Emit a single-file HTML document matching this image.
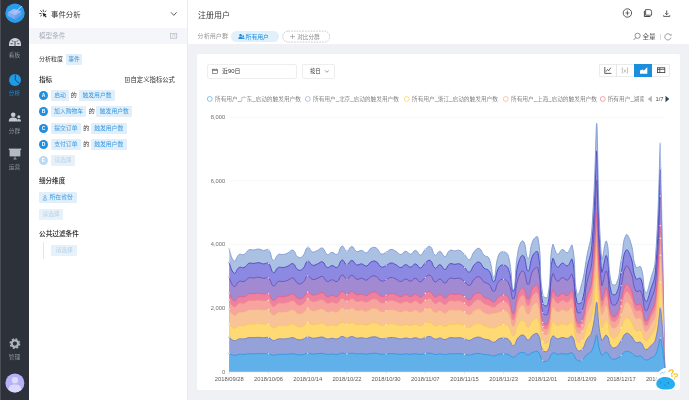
<!DOCTYPE html>
<html lang="zh-CN">
<head>
<meta charset="utf-8">
<title>事件分析</title>
<style>
*{box-sizing:border-box;margin:0;padding:0}
html,body{width:689px;height:400px;overflow:hidden;background:#eff1f5;font-family:"Liberation Sans","Noto Sans CJK SC",sans-serif;color:#444;font-size:6.5px;line-height:1}
.abs{position:absolute;left:0;top:0;width:689px;height:400px;overflow:hidden;will-change:transform}
.abs>*{position:absolute}
.t{white-space:nowrap;line-height:10px;height:10px}
.tag{background:#e1effa;color:#3a9ae0;border-radius:1px;height:11px;line-height:11px;font-size:5.8px;text-align:center;white-space:nowrap}
.tag.dim{background:#e6f1fa;color:#b9d3ea}
.b{font-weight:500;color:#222}
.circ{width:9px;height:9px;border-radius:50%;background:#1e90dd;color:#fff;font-size:5px;line-height:9px;text-align:center;font-weight:bold}
.nav{color:#8d939f;font-size:5.7px;width:29px;text-align:center;line-height:8px;height:8px;left:0}
.lg{font-size:5.7px;color:#4a4a4a;font-weight:300;white-space:nowrap;line-height:8px;height:8px}
.ring{width:5.5px;height:5.5px;border-radius:50%;border:0.55px solid #1e90dd;background:#fff}
.de{color:#333;font-size:6px}
svg{position:absolute;left:0;top:0;overflow:visible}
</style>
</head>
<body>
<div class="abs">
  <!-- sidebar -->
  <div style="left:0;top:0;width:29px;height:400px;background:#2c313a"></div>
  <div style="left:0;top:0;width:1px;height:400px;background:#4a4d54"></div>
  <div class="nav" style="top:51px">看板</div>
  <div class="nav" style="top:89px;color:#1f8fdc">分析</div>
  <div class="nav" style="top:126.5px">分群</div>
  <div class="nav" style="top:162.5px">运营</div>
  <div class="nav" style="top:352.5px">管理</div>

  <!-- left panel -->
  <div style="left:29px;top:0;width:158px;height:400px;background:#fff"></div>
  <div style="left:187px;top:0;width:1px;height:400px;background:#e8ebef"></div>
  <div style="left:29px;top:28px;width:158px;height:16px;background:#f4f6f9"></div>
  <div class="t" style="left:51px;top:9.6px;font-size:7.4px;color:#333">事件分析</div>
  <div class="t" style="left:39px;top:31px;font-size:6.6px;color:#a9aeb8">模型条件</div>
  <div class="t" style="left:39px;top:54px;font-size:6px;color:#333">分析粒度</div>
  <div class="tag" style="left:66px;top:54px;width:16px">事件</div>
  <div class="t b" style="left:39px;top:75px;font-size:6.6px">指标</div>
  <div class="t" style="left:130.5px;top:75px;font-size:6.35px;color:#333">自定义指标公式</div>

  <div class="circ" style="left:39px;top:91px">A</div>
  <div class="tag" style="left:51px;top:90px;width:18px">启动</div>
  <div class="t de" style="left:70.8px;top:89.9px">的</div>
  <div class="tag" style="left:79px;top:90px;width:36px">触发用户数</div>

  <div class="circ" style="left:39px;top:107px">B</div>
  <div class="tag" style="left:51px;top:106px;width:35.2px">加入购物车</div>
  <div class="t de" style="left:88.8px;top:105.9px">的</div>
  <div class="tag" style="left:96.3px;top:106px;width:36px">触发用户数</div>

  <div class="circ" style="left:39px;top:124px">C</div>
  <div class="tag" style="left:51px;top:123px;width:29.7px">提交订单</div>
  <div class="t de" style="left:83.2px;top:122.9px">的</div>
  <div class="tag" style="left:90.7px;top:123px;width:36px">触发用户数</div>

  <div class="circ" style="left:39px;top:140px">D</div>
  <div class="tag" style="left:51px;top:139px;width:29.7px">支付订单</div>
  <div class="t de" style="left:83.2px;top:138.9px">的</div>
  <div class="tag" style="left:90.7px;top:139px;width:36px">触发用户数</div>

  <div class="circ" style="left:39px;top:156px;background:#b9daf5">E</div>
  <div class="tag dim" style="left:51px;top:155px;width:23.7px">请选择</div>

  <div class="t b" style="left:39px;top:176.3px;font-size:6.55px">细分维度</div>
  <div class="tag" style="left:39px;top:192.4px;width:37.5px;text-align:left;padding-left:10.4px;font-size:5.9px">所在省份</div>
  <div class="tag dim" style="left:39px;top:208.6px;width:23.7px">请选择</div>
  <div class="t b" style="left:39px;top:228.6px;font-size:6.67px">公共过滤条件</div>
  <div style="left:43px;top:242px;width:0.8px;height:16.6px;background:#e3e6ea"></div>
  <div class="tag dim" style="left:51px;top:244.6px;width:26.4px">请选择</div>

  <!-- main header -->
  <div style="left:188px;top:0;width:501px;height:44px;background:#fff"></div>
  <div class="t" style="left:198px;top:10.6px;font-size:8px;color:#3a3a3a">注册用户</div>
  <div class="t" style="left:197.6px;top:31.3px;font-size:6.1px;color:#999">分析用户群</div>
  <div style="left:231.3px;top:30.8px;width:48px;height:11.6px;border-radius:6px;background:#e1f0fb"></div>
  <div class="t" style="left:245.6px;top:31.5px;font-size:5.85px;color:#1e8ee0">所有用户</div>
  
  <div class="t" style="left:297.2px;top:31.5px;font-size:5.65px;color:#8a8a8a">对比分群</div>
  <div class="t" style="left:642.5px;top:32px;font-size:6.5px;color:#555">全量</div>
  <div style="left:660px;top:34px;width:0.7px;height:6px;background:#ddd"></div>

  <!-- card -->
  <div style="left:196.5px;top:54px;width:483px;height:335.5px;background:#fff;border-radius:2px"></div>
  <div style="left:206.5px;top:63.5px;width:90.7px;height:15.2px;border:0.7px solid #eee;border-radius:2px;background:#fff"></div>
  <div class="t" style="left:222px;top:66.3px;font-size:5.9px;color:#333">近90日</div>
  <div style="left:301.6px;top:63.5px;width:33.1px;height:15.2px;border:0.7px solid #eee;border-radius:2px;background:#fff"></div>
  <div class="t" style="left:309.9px;top:66.3px;font-size:5.4px;color:#333">按日</div>

  <!-- toggle -->
  <div style="left:598.6px;top:63.6px;width:71.4px;height:13.2px;border:0.7px solid #ebebeb;border-radius:1px;background:#fff"></div>
  <div style="left:616.4px;top:63.6px;width:0.7px;height:13.2px;background:#e6e6e6"></div>
  <div style="left:634px;top:63.6px;width:17.7px;height:13.2px;background:#1b8fdd"></div>

  <!-- legend -->
  <div class="lg" style="left:215px;top:95px">所有用户_广东_启动的触发用户数</div>
  <div class="lg" style="left:313px;top:95px">所有用户_北京_启动的触发用户数</div>
  <div class="lg" style="left:412px;top:95px">所有用户_浙江_启动的触发用户数</div>
  <div class="lg" style="left:511px;top:95px">所有用户_上海_启动的触发用户数</div>
  <div class="lg" style="left:607.7px;top:95px;width:36.3px;overflow:hidden">所有用户_湖南</div>
  <div class="lg" style="left:655.5px;top:95px;font-size:5.8px;font-weight:400">1/7</div>

  <svg width="689" height="400" viewBox="0 0 689 400">
    <!-- gridlines -->
    <g stroke="#f1f1f1" stroke-width="0.6">
      <line x1="229" x2="665" y1="117.2" y2="117.2"/>
      <line x1="229" x2="665" y1="180.8" y2="180.8"/>
      <line x1="229" x2="665" y1="244.4" y2="244.4"/>
      <line x1="229" x2="665" y1="308.1" y2="308.1"/>
    </g>
    <g font-family="Liberation Sans, sans-serif" font-size="5.75" fill="#6e6e6e" text-anchor="end">
      <text x="225.2" y="119.2">8,000</text>
      <text x="225.2" y="182.8">6,000</text>
      <text x="225.2" y="246.4">4,000</text>
      <text x="225.2" y="310.1">2,000</text>
      <text x="225.2" y="373.7">0</text>
    </g>
    <path d="M229.3 249.0C229.3 249.0 231.2 259.3 234.2 261.0C236.1 262.1 236.1 256.5 239.1 254.5C241.0 253.3 242.0 255.5 244.0 254.5C246.9 253.2 246.1 251.2 248.9 249.9C251.0 248.9 251.4 250.1 253.8 249.9C256.3 249.7 256.3 249.0 258.7 249.1C261.2 249.2 261.2 250.2 263.6 250.4C266.0 250.6 267.1 248.4 268.5 249.9C272.0 253.4 270.5 258.9 273.4 260.3C275.4 261.2 275.4 256.3 278.3 254.5C280.3 253.4 280.8 254.9 283.2 254.5C285.7 254.1 285.8 253.8 288.1 252.8C290.7 251.7 291.1 249.3 293.0 250.2C296.0 251.5 294.8 255.3 297.9 257.1C299.7 258.2 301.2 257.6 302.8 256.0C306.1 252.7 304.8 248.5 307.7 247.3C309.7 246.5 309.8 251.0 312.6 251.9C314.7 252.6 315.1 251.3 317.5 250.4C320.0 249.4 320.4 247.3 322.4 248.1C325.3 249.3 324.4 253.2 327.3 254.5C329.3 255.3 329.8 252.3 332.2 252.3C334.7 252.3 335.4 255.6 337.1 254.5C340.3 252.5 339.2 247.0 342.0 246.1C344.1 245.4 344.4 251.2 346.9 251.3C349.3 251.4 349.4 246.4 351.8 246.5C354.3 246.6 353.8 250.5 356.7 251.6C358.7 252.4 359.2 250.1 361.6 250.4C364.1 250.7 364.3 253.3 366.5 252.8C369.2 252.1 368.5 249.4 371.4 248.0C373.4 247.0 374.4 246.9 376.3 248.0C379.3 249.8 378.3 252.5 381.2 253.8C383.2 254.7 383.8 253.3 386.1 252.3C388.7 251.1 388.4 249.7 391.0 249.4C393.3 249.2 393.6 250.1 395.9 251.3C398.5 252.6 398.3 254.5 400.8 254.5C403.2 254.5 403.2 251.4 405.7 251.3C408.1 251.2 408.2 254.4 410.6 254.2C413.1 254.0 413.1 250.2 415.5 250.4C418.0 250.6 418.0 255.3 420.4 255.1C422.9 254.8 422.5 251.8 425.3 249.4C427.4 247.5 428.4 245.4 430.2 246.5C433.3 248.3 432.1 253.7 435.1 255.2C437.0 256.1 437.7 251.0 440.0 251.3C442.6 251.7 442.5 256.9 444.9 256.7C447.4 256.5 446.7 252.2 449.8 250.4C451.6 249.3 452.2 250.9 454.7 250.9C457.1 250.9 457.4 249.6 459.6 250.4C462.3 251.4 462.1 252.3 464.5 254.5C467.0 256.9 467.2 260.2 469.4 259.6C472.1 258.8 471.2 255.0 474.2 251.6C476.1 249.4 477.1 247.7 479.1 248.4C482.0 249.5 481.1 252.3 484.0 255.2C486.0 257.2 487.8 255.6 488.9 258.1C492.7 266.5 491.6 277.8 493.8 277.0C496.5 276.1 494.8 264.8 498.7 254.7C499.7 252.2 501.4 251.4 503.6 251.8C506.3 252.3 507.7 253.3 508.5 256.5C512.6 272.3 511.2 291.3 513.4 289.8C516.1 288.0 514.4 269.3 518.3 249.8C519.3 245.0 521.5 239.6 523.2 241.1C526.4 243.9 525.7 258.7 528.1 258.5C530.6 258.3 529.3 248.5 533.0 240.4C534.2 238.0 537.5 235.0 537.9 237.5C542.4 262.3 538.3 267.9 542.8 295.0C543.2 297.4 547.3 298.8 547.7 296.5C552.2 273.7 548.6 262.4 552.6 244.8C553.4 241.2 554.5 252.8 557.5 254.2C559.4 255.1 559.8 249.9 562.4 249.5C564.7 249.2 565.3 253.5 567.3 252.7C570.2 251.5 571.5 242.4 572.2 245.5C576.4 263.0 573.2 279.0 577.1 294.0C578.1 297.7 580.5 288.8 582.0 283.0C585.4 269.8 584.4 269.5 586.9 256.0C589.3 243.0 590.8 243.2 591.8 230.0C595.7 176.8 595.8 123.3 596.7 123.3C597.9 126.9 597.3 207.1 601.6 259.0C602.2 266.1 605.0 237.5 606.5 241.2C609.9 249.5 607.0 263.9 611.4 283.0C611.9 285.2 615.5 285.8 616.3 283.8C620.4 274.3 618.8 271.9 621.2 260.0C623.7 247.5 622.5 241.0 626.1 235.0C627.4 232.7 629.6 238.8 631.0 243.4C634.5 254.8 631.8 257.2 635.9 267.0C636.7 269.0 640.0 265.0 640.8 267.0C644.9 277.7 642.5 288.5 645.7 292.5C647.4 294.7 648.7 286.1 650.6 279.4C653.6 268.8 654.7 268.9 655.5 257.9C659.6 201.0 659.6 135.4 660.4 143.6C661.8 159.6 665.3 368.0 665.3 368.0L665.3 371.7 L229.3 371.7 Z" fill="#abc1e3"/>
<path d="M229.3 262.6C229.3 262.6 231.3 271.8 234.2 273.3C236.2 274.2 236.2 269.3 239.1 267.5C241.1 266.4 241.9 268.4 244.0 267.5C246.8 266.4 246.2 264.6 248.9 263.4C251.1 262.5 251.4 263.6 253.8 263.4C256.3 263.2 256.3 262.6 258.7 262.7C261.2 262.8 261.2 263.7 263.6 263.9C266.1 264.0 267.0 262.0 268.5 263.4C271.9 266.4 270.5 271.4 273.4 272.7C275.4 273.5 275.4 269.0 278.3 267.5C280.3 266.5 280.8 267.9 283.2 267.5C285.7 267.1 285.7 266.9 288.1 266.0C290.6 265.0 291.0 262.9 293.0 263.7C295.9 264.8 294.9 268.2 297.9 269.8C299.8 270.8 301.1 270.4 302.8 268.8C306.0 266.0 304.8 262.2 307.7 261.1C309.7 260.4 309.9 264.4 312.6 265.2C314.8 265.8 315.1 264.7 317.5 263.9C320.0 263.0 320.4 261.1 322.4 261.8C325.3 262.9 324.4 266.4 327.3 267.5C329.3 268.3 329.8 265.6 332.2 265.6C334.7 265.6 335.3 268.5 337.1 267.5C340.2 265.8 339.2 260.9 342.0 260.0C344.1 259.4 344.4 264.6 346.9 264.7C349.3 264.8 349.4 260.3 351.8 260.4C354.3 260.5 353.9 263.9 356.7 264.9C358.8 265.7 359.2 263.6 361.6 263.9C364.1 264.1 364.3 266.5 366.5 266.0C369.2 265.4 368.6 262.9 371.4 261.7C373.5 260.8 374.3 260.7 376.3 261.7C379.2 263.3 378.3 265.8 381.2 266.9C383.2 267.7 383.7 266.5 386.1 265.6C388.6 264.5 388.5 263.2 391.0 263.0C393.4 262.8 393.5 263.6 395.9 264.7C398.4 265.8 398.3 267.5 400.8 267.5C403.2 267.5 403.2 264.7 405.7 264.7C408.1 264.6 408.2 267.4 410.6 267.2C413.1 267.0 413.1 263.7 415.5 263.9C418.0 264.1 418.0 268.3 420.4 268.0C422.9 267.8 422.5 265.1 425.3 263.0C427.4 261.3 428.3 259.4 430.2 260.4C433.2 262.0 432.1 266.8 435.1 268.1C437.0 269.0 437.7 264.4 440.0 264.7C442.6 265.0 442.5 269.7 444.9 269.5C447.4 269.3 446.8 265.4 449.8 263.9C451.7 262.8 452.2 264.3 454.7 264.3C457.1 264.3 457.4 263.2 459.6 263.9C462.3 264.8 462.1 265.6 464.5 267.5C467.0 269.6 467.2 272.6 469.4 272.0C472.1 271.3 471.3 267.9 474.2 264.9C476.2 263.0 477.1 261.4 479.1 262.1C482.0 263.0 481.2 265.6 484.0 268.1C486.1 269.9 487.4 268.6 488.9 270.7C492.3 275.3 491.7 282.3 493.8 281.6C496.5 280.8 495.2 273.7 498.7 267.7C500.1 265.4 501.4 264.7 503.6 265.1C506.3 265.5 507.5 266.4 508.5 269.3C512.4 279.6 511.3 292.8 513.4 291.5C516.2 289.8 514.6 276.9 518.3 263.3C519.5 259.0 521.5 254.2 523.2 255.6C526.4 258.1 525.7 271.2 528.1 271.1C530.6 270.9 529.3 262.0 533.0 255.0C534.2 252.7 537.4 250.0 537.9 252.4C542.3 274.3 538.4 279.6 542.8 303.5C543.3 305.9 547.2 307.1 547.7 304.8C552.1 284.7 548.6 274.4 552.6 258.9C553.5 255.6 554.6 266.0 557.5 267.2C559.5 268.1 559.8 263.4 562.4 263.1C564.7 262.8 565.3 266.6 567.3 265.9C570.2 264.9 571.4 256.6 572.2 259.5C576.3 275.0 572.7 283.9 577.1 302.6C577.6 304.8 581.3 303.6 582.0 301.3C586.2 286.7 584.1 285.0 586.9 268.8C589.0 257.2 590.8 257.5 591.8 245.7C595.7 198.5 595.8 150.9 596.7 150.9C597.9 154.0 597.3 225.4 601.6 271.5C602.2 277.8 605.0 252.4 606.5 255.7C609.9 263.1 607.1 276.1 611.4 292.8C612.0 295.1 615.4 295.5 616.3 293.6C620.3 285.2 618.8 283.0 621.2 272.4C623.7 261.3 622.6 255.5 626.1 250.2C627.5 248.1 629.6 253.5 631.0 257.6C634.4 267.7 631.9 270.1 635.9 278.6C636.8 280.6 639.9 276.6 640.8 278.6C644.8 288.0 642.5 297.7 645.7 301.3C647.4 303.2 648.7 295.6 650.6 289.6C653.6 280.3 654.7 280.3 655.5 270.5C659.6 220.0 659.6 161.6 660.4 168.9C661.8 183.2 665.3 368.4 665.3 368.4L665.3 371.7 L229.3 371.7 Z" fill="#8b89e2"/>
<path d="M229.3 277.2C229.3 277.2 231.3 285.2 234.2 286.5C236.2 287.3 236.3 282.9 239.1 281.5C241.2 280.4 241.9 282.2 244.0 281.5C246.7 280.5 246.2 278.9 248.9 277.9C251.1 277.1 251.4 278.1 253.8 277.9C256.3 277.8 256.3 277.2 258.7 277.3C261.2 277.4 261.2 278.1 263.6 278.3C266.1 278.5 266.9 276.6 268.5 277.9C271.7 280.4 270.6 284.9 273.4 285.9C275.5 286.7 275.5 282.7 278.3 281.5C280.4 280.5 280.8 281.8 283.2 281.5C285.7 281.1 285.7 281.0 288.1 280.1C290.6 279.3 291.0 277.4 293.0 278.1C295.9 279.1 295.0 282.1 297.9 283.5C299.9 284.4 301.0 284.0 302.8 282.6C305.9 280.3 304.9 276.8 307.7 275.9C309.8 275.2 309.9 278.8 312.6 279.5C314.8 280.0 315.1 279.0 317.5 278.3C320.0 277.6 320.3 275.9 322.4 276.5C325.2 277.4 324.5 280.5 327.3 281.5C329.4 282.1 329.8 279.8 332.2 279.8C334.7 279.8 335.2 282.4 337.1 281.5C340.1 280.0 339.3 275.7 342.0 275.0C344.1 274.4 344.4 278.9 346.9 279.0C349.3 279.1 349.4 275.2 351.8 275.3C354.3 275.4 354.0 278.4 356.7 279.2C358.9 279.9 359.2 278.1 361.6 278.3C364.1 278.5 364.2 280.6 366.5 280.1C369.1 279.6 368.7 277.5 371.4 276.5C373.6 275.6 374.2 275.5 376.3 276.5C379.1 277.7 378.4 280.0 381.2 280.9C383.3 281.6 383.7 280.6 386.1 279.8C388.6 278.9 388.5 277.7 391.0 277.5C393.4 277.3 393.5 278.0 395.9 279.0C398.4 280.0 398.3 281.5 400.8 281.5C403.2 281.5 403.2 279.1 405.7 279.0C408.1 278.9 408.2 281.4 410.6 281.2C413.1 281.0 413.1 278.1 415.5 278.3C418.0 278.5 418.0 282.1 420.4 281.9C422.9 281.7 422.6 279.3 425.3 277.5C427.5 276.0 428.2 274.4 430.2 275.3C433.1 276.7 432.2 280.9 435.1 282.0C437.1 282.8 437.7 278.7 440.0 279.0C442.5 279.3 442.5 283.3 444.9 283.1C447.4 283.0 446.9 279.6 449.8 278.3C451.8 277.4 452.2 278.7 454.7 278.7C457.1 278.7 457.3 277.7 459.6 278.3C462.2 279.1 462.1 279.8 464.5 281.5C467.0 283.3 467.2 285.9 469.4 285.4C472.1 284.8 471.4 281.8 474.2 279.2C476.3 277.5 477.0 276.2 479.1 276.8C481.9 277.5 481.2 279.9 484.0 282.0C486.1 283.6 487.1 282.4 488.9 284.2C492.0 287.2 491.7 292.1 493.8 291.5C496.6 290.8 495.4 285.7 498.7 281.6C500.3 279.6 501.3 279.1 503.6 279.4C506.2 279.7 507.2 280.4 508.5 283.0C512.1 290.2 511.3 300.1 513.4 299.0C516.2 297.5 514.8 287.9 518.3 277.8C519.7 274.0 521.4 269.9 523.2 271.1C526.3 273.3 525.7 284.7 528.1 284.5C530.6 284.4 529.4 276.5 533.0 270.6C534.3 268.4 537.4 266.1 537.9 268.4C542.3 287.1 538.4 292.2 542.8 312.6C543.3 314.9 547.2 316.0 547.7 313.8C552.1 296.6 548.6 287.4 552.6 274.0C553.5 271.1 554.6 280.2 557.5 281.2C559.5 282.0 559.8 277.9 562.4 277.6C564.7 277.3 565.2 280.7 567.3 280.1C570.1 279.2 571.4 271.9 572.2 274.5C576.3 287.8 572.8 295.9 577.1 311.9C577.7 314.0 581.3 312.9 582.0 310.7C586.2 298.3 584.1 296.6 586.9 282.6C589.0 272.5 590.8 272.8 591.8 262.6C595.7 221.7 595.8 180.4 596.7 180.4C597.9 183.2 597.3 245.1 601.6 284.9C602.2 290.5 605.0 268.4 606.5 271.2C609.9 277.6 607.1 289.2 611.4 303.4C612.0 305.6 615.3 305.8 616.3 304.0C620.2 297.0 618.8 294.9 621.2 285.7C623.7 276.1 622.6 271.0 626.1 266.4C627.5 264.6 629.5 269.2 631.0 272.9C634.4 281.5 632.0 283.9 635.9 291.1C636.9 293.0 639.8 289.2 640.8 291.1C644.7 299.0 642.5 307.6 645.7 310.7C647.4 312.4 648.6 305.9 650.6 300.6C653.5 292.6 654.7 292.6 655.5 284.1C659.6 240.4 659.6 189.8 660.4 196.1C661.8 208.4 665.3 368.9 665.3 368.9L665.3 371.7 L229.3 371.7 Z" fill="#a18ad2"/>
<path d="M229.3 293.2C229.3 293.2 231.4 299.8 234.2 300.9C236.3 301.6 236.4 297.9 239.1 296.7C241.3 295.8 241.8 297.4 244.0 296.7C246.7 295.9 246.3 294.5 248.9 293.7C251.2 293.1 251.4 293.9 253.8 293.7C256.3 293.6 256.3 293.2 258.7 293.2C261.2 293.3 261.2 293.9 263.6 294.1C266.1 294.2 266.7 292.6 268.5 293.7C271.6 295.7 270.6 299.6 273.4 300.4C275.5 301.0 275.6 297.7 278.3 296.7C280.5 295.9 280.8 297.0 283.2 296.7C285.7 296.4 285.7 296.3 288.1 295.6C290.6 294.9 290.9 293.3 293.0 293.9C295.8 294.7 295.1 297.3 297.9 298.4C300.0 299.2 300.9 298.9 302.8 297.7C305.8 295.8 305.0 292.8 307.7 292.1C309.8 291.5 310.0 294.5 312.6 295.0C314.9 295.5 315.1 294.7 317.5 294.1C320.0 293.5 320.2 292.0 322.4 292.6C325.1 293.3 324.6 295.9 327.3 296.7C329.5 297.3 329.8 295.3 332.2 295.3C334.7 295.3 335.1 297.5 337.1 296.7C340.0 295.5 339.3 291.9 342.0 291.3C344.2 290.9 344.4 294.6 346.9 294.6C349.3 294.7 349.4 291.5 351.8 291.6C354.3 291.6 354.0 294.2 356.7 294.8C358.9 295.4 359.2 293.9 361.6 294.1C364.1 294.3 364.2 296.0 366.5 295.6C369.1 295.2 368.7 293.4 371.4 292.5C373.6 291.8 374.1 291.7 376.3 292.5C379.0 293.6 378.5 295.5 381.2 296.2C383.4 296.9 383.7 296.0 386.1 295.3C388.6 294.6 388.5 293.6 391.0 293.4C393.4 293.3 393.5 293.8 395.9 294.6C398.4 295.5 398.3 296.7 400.8 296.7C403.2 296.7 403.2 294.7 405.7 294.6C408.1 294.6 408.2 296.6 410.6 296.5C413.1 296.4 413.1 293.9 415.5 294.1C418.0 294.2 418.0 297.2 420.4 297.1C422.9 296.9 422.6 294.9 425.3 293.4C427.5 292.2 428.1 290.8 430.2 291.6C433.0 292.7 432.3 296.3 435.1 297.1C437.2 297.8 437.6 294.4 440.0 294.6C442.5 294.9 442.5 298.2 444.9 298.1C447.4 298.0 447.0 295.1 449.8 294.1C451.9 293.3 452.2 294.4 454.7 294.4C457.1 294.4 457.3 293.5 459.6 294.1C462.2 294.7 462.1 295.3 464.5 296.7C467.0 298.2 467.1 300.4 469.4 300.0C472.0 299.4 471.4 296.9 474.2 294.8C476.3 293.3 477.0 292.3 479.1 292.8C481.9 293.4 481.3 295.4 484.0 297.1C486.2 298.5 486.6 297.8 488.9 299.0C491.5 300.3 491.7 302.5 493.8 302.0C496.6 301.4 495.9 298.8 498.7 296.8C500.8 295.3 501.3 294.7 503.6 295.0C506.2 295.3 507.3 295.5 508.5 298.0C512.2 305.1 511.3 315.0 513.4 314.0C516.2 312.8 514.7 303.2 518.3 293.7C519.6 290.3 521.4 287.1 523.2 288.1C526.3 289.8 525.7 299.4 528.1 299.3C530.6 299.1 529.6 292.4 533.0 287.7C534.5 285.7 537.3 283.7 537.9 285.8C542.2 301.1 538.5 306.0 542.8 322.6C543.4 324.8 547.1 325.7 547.7 323.6C552.0 309.6 548.6 301.5 552.6 290.5C553.5 287.9 554.7 295.6 557.5 296.5C559.6 297.1 559.9 293.7 562.4 293.5C564.8 293.3 565.2 296.1 567.3 295.5C570.0 294.8 571.3 288.6 572.2 290.9C576.2 301.8 572.9 309.0 577.1 322.0C577.8 324.0 581.2 323.1 582.0 321.0C586.1 311.0 584.1 309.2 586.9 297.7C589.0 289.2 590.8 289.6 591.8 281.0C595.7 247.1 595.8 212.7 596.7 212.7C597.9 215.0 597.3 266.6 601.6 299.6C602.2 304.3 605.0 285.8 606.5 288.2C609.9 293.5 607.2 303.4 611.4 314.9C612.1 317.0 615.1 317.2 616.3 315.4C620.0 309.8 618.8 307.8 621.2 300.2C623.7 292.2 622.7 287.9 626.1 284.2C627.6 282.6 629.4 286.4 631.0 289.6C634.3 296.6 632.1 298.9 635.9 304.7C637.0 306.5 639.7 302.9 640.8 304.7C644.6 311.0 642.6 318.5 645.7 321.0C647.5 322.5 648.6 317.0 650.6 312.6C653.5 306.0 654.7 306.1 655.5 298.9C659.6 262.6 659.6 220.5 660.4 225.7C661.8 236.0 665.3 369.3 665.3 369.3L665.3 371.7 L229.3 371.7 Z" fill="#ee819f"/>
<path d="M229.3 299.9C229.3 299.9 231.4 306.0 234.2 306.9C236.3 307.6 236.4 304.2 239.1 303.1C241.3 302.3 241.8 303.8 244.0 303.1C246.7 302.4 246.3 301.2 248.9 300.4C251.2 299.8 251.4 300.6 253.8 300.4C256.3 300.3 256.3 299.9 258.7 300.0C261.2 300.1 261.2 300.6 263.6 300.7C266.1 300.9 266.6 299.3 268.5 300.4C271.5 302.2 270.7 305.8 273.4 306.5C275.6 307.1 275.6 304.1 278.3 303.1C280.5 302.4 280.8 303.4 283.2 303.1C285.7 302.9 285.7 302.8 288.1 302.1C290.6 301.5 290.8 300.1 293.0 300.6C295.7 301.3 295.2 303.7 297.9 304.7C300.1 305.4 300.8 305.2 302.8 304.0C305.7 302.3 305.0 299.6 307.7 298.9C309.9 298.4 310.0 301.1 312.6 301.6C314.9 302.0 315.1 301.3 317.5 300.7C320.0 300.2 320.2 298.9 322.4 299.4C325.1 300.1 324.6 302.5 327.3 303.1C329.5 303.7 329.8 301.9 332.2 301.9C334.7 301.9 335.0 303.9 337.1 303.1C339.9 302.1 339.3 298.7 342.0 298.2C344.2 297.8 344.4 301.2 346.9 301.3C349.3 301.3 349.4 298.4 351.8 298.5C354.3 298.5 354.1 300.8 356.7 301.4C359.0 302.0 359.2 300.6 361.6 300.7C364.1 300.9 364.2 302.5 366.5 302.1C369.1 301.8 368.8 300.1 371.4 299.3C373.7 298.7 374.1 298.6 376.3 299.3C379.0 300.3 378.5 302.0 381.2 302.7C383.4 303.3 383.7 302.5 386.1 301.9C388.6 301.2 388.5 300.3 391.0 300.2C393.4 300.0 393.5 300.5 395.9 301.3C398.4 302.0 398.3 303.1 400.8 303.1C403.2 303.1 403.2 301.3 405.7 301.3C408.1 301.2 408.2 303.1 410.6 303.0C413.1 302.8 413.1 300.6 415.5 300.7C418.0 300.9 418.0 303.6 420.4 303.5C422.9 303.3 422.7 301.5 425.3 300.2C427.6 299.0 428.1 297.7 430.2 298.5C433.0 299.4 432.3 302.8 435.1 303.5C437.2 304.2 437.6 301.1 440.0 301.3C442.5 301.5 442.5 304.6 444.9 304.4C447.4 304.3 447.0 301.7 449.8 300.7C451.9 300.0 452.2 301.0 454.7 301.0C457.1 301.0 457.2 300.2 459.6 300.7C462.1 301.3 462.1 301.8 464.5 303.1C467.0 304.5 467.1 306.5 469.4 306.1C472.0 305.7 471.5 303.3 474.2 301.4C476.4 300.0 476.9 299.1 479.1 299.6C481.8 300.1 481.4 302.0 484.0 303.5C486.3 304.8 486.5 304.4 488.9 305.2C491.4 306.1 491.6 307.5 493.8 307.0C496.5 306.5 496.1 304.7 498.7 303.3C501.0 302.0 501.3 301.3 503.6 301.6C506.2 301.8 507.3 302.0 508.5 304.3C512.2 311.2 511.2 320.9 513.4 320.0C516.1 318.9 514.7 309.5 518.3 300.4C519.6 297.2 521.3 294.3 523.2 295.3C526.2 296.9 525.7 305.6 528.1 305.5C530.6 305.4 529.6 299.1 533.0 294.9C534.5 293.0 537.3 291.1 537.9 293.2C542.2 307.1 538.5 311.8 542.8 326.8C543.4 329.0 547.0 329.8 547.7 327.7C551.9 315.1 548.7 307.4 552.6 297.5C553.6 295.1 554.7 302.2 557.5 303.0C559.6 303.6 559.9 300.4 562.4 300.2C564.8 300.0 565.1 302.6 567.3 302.1C570.0 301.4 571.3 295.7 572.2 297.9C576.2 307.7 572.9 314.5 577.1 326.2C577.8 328.3 581.1 327.4 582.0 325.4C586.0 316.3 584.1 314.6 586.9 304.0C589.0 296.3 590.8 296.7 591.8 288.8C595.7 257.9 595.8 226.4 596.7 226.4C597.9 228.5 597.3 275.6 601.6 305.8C602.2 310.1 604.9 293.1 606.5 295.4C609.8 300.2 607.3 309.4 611.4 319.8C612.2 321.9 615.1 322.0 616.3 320.3C620.0 315.2 618.8 313.3 621.2 306.4C623.7 299.1 622.7 295.1 626.1 291.7C627.6 290.2 629.4 293.6 631.0 296.6C634.3 303.0 632.2 305.3 635.9 310.5C637.1 312.2 639.6 308.7 640.8 310.5C644.5 316.1 642.6 323.1 645.7 325.4C647.5 326.7 648.6 321.8 650.6 317.7C653.5 311.7 654.7 311.8 655.5 305.1C659.6 272.1 659.6 233.5 660.4 238.3C661.8 247.6 665.3 369.5 665.3 369.5L665.3 371.7 L229.3 371.7 Z" fill="#f7a4a0"/>
<path d="M229.3 309.1C229.3 309.1 231.5 314.4 234.2 315.2C236.4 315.8 236.5 312.8 239.1 311.9C241.4 311.2 241.7 312.5 244.0 311.9C246.6 311.3 246.4 310.2 248.9 309.6C251.3 309.0 251.4 309.7 253.8 309.6C256.3 309.5 256.3 309.1 258.7 309.2C261.2 309.2 261.2 309.7 263.6 309.8C266.1 309.9 266.6 308.6 268.5 309.6C271.5 311.1 270.7 314.2 273.4 314.9C275.6 315.4 275.7 312.7 278.3 311.9C280.6 311.2 280.8 312.1 283.2 311.9C285.7 311.7 285.7 311.6 288.1 311.1C290.6 310.5 290.8 309.2 293.0 309.7C295.7 310.3 295.2 312.4 297.9 313.3C300.1 313.9 300.7 313.8 302.8 312.7C305.6 311.3 305.0 308.8 307.7 308.3C309.9 307.8 310.1 310.2 312.6 310.6C315.0 311.0 315.1 310.3 317.5 309.8C320.0 309.3 320.2 308.2 322.4 308.7C325.1 309.2 324.7 311.4 327.3 311.9C329.6 312.4 329.8 310.8 332.2 310.8C334.7 310.8 335.0 312.6 337.1 311.9C339.9 311.0 339.4 308.1 342.0 307.6C344.3 307.3 344.4 310.2 346.9 310.3C349.3 310.3 349.4 307.8 351.8 307.8C354.3 307.9 354.1 309.9 356.7 310.4C359.0 310.9 359.2 309.7 361.6 309.8C364.1 310.0 364.1 311.4 366.5 311.1C369.0 310.7 368.8 309.3 371.4 308.6C373.7 308.0 374.0 307.9 376.3 308.6C378.9 309.4 378.6 311.0 381.2 311.6C383.5 312.1 383.7 311.4 386.1 310.8C388.6 310.2 388.5 309.5 391.0 309.3C393.4 309.2 393.5 309.7 395.9 310.3C398.4 311.0 398.3 311.9 400.8 311.9C403.2 311.9 403.2 310.3 405.7 310.3C408.1 310.3 408.2 311.9 410.6 311.8C413.1 311.7 413.1 309.7 415.5 309.8C418.0 310.0 418.0 312.4 420.4 312.2C422.9 312.1 422.7 310.5 425.3 309.3C427.6 308.3 428.0 307.2 430.2 307.8C432.9 308.7 432.3 311.6 435.1 312.3C437.2 312.8 437.6 310.1 440.0 310.3C442.5 310.5 442.5 313.2 444.9 313.0C447.4 312.9 447.1 310.6 449.8 309.8C452.0 309.2 452.2 310.1 454.7 310.1C457.1 310.1 457.2 309.4 459.6 309.8C462.1 310.3 462.1 310.8 464.5 311.9C467.0 313.1 467.1 314.9 469.4 314.5C472.0 314.1 471.5 312.0 474.2 310.4C476.4 309.2 476.9 308.4 479.1 308.8C481.8 309.3 481.4 310.9 484.0 312.3C486.3 313.4 486.5 313.6 488.9 313.8C491.4 313.9 491.4 313.4 493.8 313.0C496.3 312.6 496.3 312.6 498.7 312.0C501.2 311.4 501.3 310.3 503.6 310.6C506.2 310.8 507.2 310.8 508.5 312.9C512.1 318.5 511.2 326.8 513.4 326.0C516.1 325.1 514.8 317.1 518.3 309.5C519.7 306.6 521.3 304.2 523.2 305.1C526.2 306.4 525.7 314.1 528.1 314.0C530.6 313.9 529.7 308.3 533.0 304.7C534.6 303.0 537.2 301.2 537.9 303.3C542.1 315.1 538.6 319.7 542.8 332.6C543.5 334.7 547.0 335.3 547.7 333.3C551.9 322.5 548.7 315.6 552.6 307.0C553.6 304.8 554.8 311.1 557.5 311.8C559.7 312.3 559.9 309.6 562.4 309.4C564.8 309.2 565.1 311.5 567.3 311.0C570.0 310.5 571.3 305.3 572.2 307.3C576.2 315.8 573.0 322.1 577.1 332.1C577.9 334.0 581.0 333.3 582.0 331.3C585.9 323.6 584.1 321.9 586.9 312.7C589.0 305.9 590.8 306.4 591.8 299.4C595.7 272.5 595.8 245.0 596.7 245.0C597.9 246.8 597.3 288.0 601.6 314.2C602.2 318.1 604.9 303.2 606.5 305.1C609.8 309.3 607.4 317.6 611.4 326.5C612.3 328.5 615.0 328.5 616.3 326.9C619.9 322.6 618.8 320.8 621.2 314.7C623.7 308.4 622.8 304.9 626.1 302.0C627.7 300.6 629.4 303.5 631.0 306.3C634.2 311.7 632.3 313.9 635.9 318.3C637.2 320.0 639.5 316.6 640.8 318.3C644.4 323.1 642.6 329.3 645.7 331.3C647.5 332.5 648.6 328.2 650.6 324.6C653.5 319.4 654.6 319.6 655.5 313.7C659.5 284.9 659.6 251.2 660.4 255.4C661.8 263.5 665.3 369.8 665.3 369.8L665.3 371.7 L229.3 371.7 Z" fill="#f8c397"/>
<path d="M229.3 323.6C229.3 323.6 231.5 327.7 234.2 328.3C236.4 328.8 236.6 326.4 239.1 325.8C241.4 325.2 241.7 326.2 244.0 325.8C246.6 325.3 246.4 324.4 248.9 324.0C251.3 323.5 251.4 324.0 253.8 324.0C256.3 323.9 256.3 323.6 258.7 323.6C261.2 323.7 261.2 324.1 263.6 324.2C266.1 324.2 266.4 323.1 268.5 324.0C271.3 325.1 270.8 327.5 273.4 328.0C275.7 328.4 275.8 326.4 278.3 325.8C280.7 325.2 280.8 325.9 283.2 325.8C285.7 325.6 285.7 325.5 288.1 325.1C290.6 324.7 290.7 323.7 293.0 324.1C295.6 324.5 295.3 326.2 297.9 326.8C300.2 327.3 300.6 327.2 302.8 326.3C305.5 325.3 305.1 323.4 307.7 322.9C310.0 322.6 310.1 324.4 312.6 324.7C315.0 325.0 315.1 324.5 317.5 324.2C320.0 323.8 320.1 322.9 322.4 323.2C325.0 323.7 324.7 325.3 327.3 325.8C329.6 326.1 329.8 324.9 332.2 324.9C334.7 324.9 334.9 326.3 337.1 325.8C339.8 325.1 339.4 322.8 342.0 322.5C344.3 322.2 344.4 324.5 346.9 324.5C349.3 324.5 349.4 322.6 351.8 322.6C354.3 322.7 354.2 324.2 356.7 324.6C359.1 325.0 359.2 324.0 361.6 324.2C364.1 324.3 364.1 325.3 366.5 325.1C369.0 324.9 368.9 323.7 371.4 323.2C373.8 322.8 374.0 322.7 376.3 323.2C378.9 323.8 378.6 325.0 381.2 325.5C383.5 325.9 383.7 325.3 386.1 324.9C388.6 324.5 388.5 323.9 391.0 323.8C393.4 323.7 393.5 324.0 395.9 324.5C398.4 325.0 398.3 325.8 400.8 325.8C403.2 325.8 403.2 324.5 405.7 324.5C408.1 324.5 408.1 325.7 410.6 325.6C413.0 325.6 413.1 324.1 415.5 324.2C417.9 324.2 418.0 326.1 420.4 326.0C422.9 325.9 422.7 324.6 425.3 323.8C427.6 322.9 427.9 322.1 430.2 322.6C432.8 323.2 432.4 325.5 435.1 326.0C437.3 326.5 437.6 324.4 440.0 324.5C442.5 324.7 442.4 326.7 444.9 326.6C447.3 326.5 447.2 324.8 449.8 324.2C452.1 323.6 452.2 324.3 454.7 324.3C457.1 324.3 457.2 323.8 459.6 324.2C462.1 324.5 462.0 324.9 464.5 325.8C466.9 326.7 467.0 328.0 469.4 327.8C471.9 327.5 471.6 325.8 474.2 324.6C476.5 323.6 476.8 323.0 479.1 323.4C481.7 323.7 481.5 325.0 484.0 326.0C486.4 326.9 486.5 326.7 488.9 327.2C491.4 327.7 491.5 328.3 493.8 328.0C496.4 327.7 496.2 326.7 498.7 325.8C501.1 325.0 501.2 324.5 503.6 324.7C506.1 324.9 506.9 324.7 508.5 326.5C511.8 330.3 511.2 336.6 513.4 336.0C516.1 335.3 515.0 329.2 518.3 323.9C519.9 321.5 521.2 319.8 523.2 320.5C526.1 321.5 525.7 327.4 528.1 327.3C530.6 327.3 529.9 322.8 533.0 320.2C534.8 318.7 537.0 317.2 537.9 319.1C541.9 327.9 538.8 332.1 542.8 341.6C543.7 343.7 546.8 344.1 547.7 342.2C551.7 334.3 548.8 328.4 552.6 322.0C553.7 320.1 554.9 325.1 557.5 325.6C559.8 326.1 559.9 323.9 562.4 323.8C564.8 323.7 565.0 325.4 567.3 325.1C569.9 324.6 571.1 320.4 572.2 322.2C576.0 328.5 573.2 333.9 577.1 341.2C578.1 343.1 580.8 342.5 582.0 340.7C585.7 335.0 584.1 333.4 586.9 326.3C589.0 321.1 590.8 321.7 591.8 316.2C595.7 295.6 595.7 274.3 596.7 274.3C597.9 275.7 597.4 307.6 601.6 327.5C602.3 330.7 604.9 319.0 606.5 320.5C609.8 323.7 607.6 330.4 611.4 336.9C612.5 338.8 614.7 338.7 616.3 337.2C619.6 334.2 618.8 332.6 621.2 327.9C623.7 323.0 622.9 320.2 626.1 318.1C627.8 317.0 629.2 319.1 631.0 321.4C634.1 325.4 632.5 327.5 635.9 330.7C637.4 332.1 639.3 329.1 640.8 330.7C644.2 334.1 642.7 339.2 645.7 340.7C647.6 341.6 648.5 338.4 650.6 335.5C653.4 331.6 654.6 331.8 655.5 327.1C659.5 305.2 659.6 279.1 660.4 282.3C661.8 288.6 665.3 370.2 665.3 370.2L665.3 371.7 L229.3 371.7 Z" fill="#ffd973"/>
<path d="M229.3 337.3C229.3 337.3 231.6 340.3 234.2 340.7C236.5 341.1 236.6 339.4 239.1 338.9C241.5 338.4 241.6 339.2 244.0 338.9C246.5 338.6 246.5 337.9 248.9 337.6C251.4 337.3 251.4 337.7 253.8 337.6C256.3 337.5 256.3 337.3 258.7 337.4C261.2 337.4 261.2 337.7 263.6 337.7C266.1 337.8 266.3 337.0 268.5 337.6C271.2 338.3 270.9 340.2 273.4 340.5C275.8 340.8 275.8 339.3 278.3 338.9C280.7 338.5 280.8 339.0 283.2 338.9C285.7 338.8 285.7 338.7 288.1 338.4C290.6 338.1 290.7 337.4 293.0 337.7C295.5 338.0 295.4 339.2 297.9 339.6C300.3 340.0 300.5 340.0 302.8 339.3C305.4 338.6 305.2 337.2 307.7 336.9C310.1 336.6 310.1 337.9 312.6 338.2C315.0 338.4 315.1 338.0 317.5 337.7C320.0 337.5 320.0 336.8 322.4 337.1C324.9 337.4 324.8 338.6 327.3 338.9C329.7 339.2 329.8 338.3 332.2 338.3C334.7 338.3 334.8 339.3 337.1 338.9C339.7 338.4 339.5 336.8 342.0 336.5C344.4 336.3 344.4 338.0 346.9 338.0C349.3 338.0 349.4 336.6 351.8 336.6C354.3 336.7 354.2 337.8 356.7 338.1C359.1 338.3 359.2 337.7 361.6 337.7C364.1 337.8 364.1 338.6 366.5 338.4C369.0 338.2 368.9 337.4 371.4 337.1C373.8 336.7 373.9 336.7 376.3 337.1C378.8 337.5 378.7 338.4 381.2 338.7C383.6 339.0 383.6 338.6 386.1 338.3C388.5 338.0 388.5 337.5 391.0 337.5C393.4 337.4 393.4 337.6 395.9 338.0C398.3 338.3 398.3 338.9 400.8 338.9C403.2 338.9 403.2 338.0 405.7 338.0C408.1 338.0 408.1 338.9 410.6 338.8C413.0 338.7 413.0 337.7 415.5 337.7C417.9 337.8 417.9 339.1 420.4 339.1C422.8 339.0 422.8 338.1 425.3 337.5C427.7 336.9 427.8 336.3 430.2 336.6C432.7 337.1 432.5 338.7 435.1 339.1C437.4 339.4 437.5 337.9 440.0 338.0C442.4 338.1 442.4 339.6 444.9 339.5C447.3 339.4 447.2 338.2 449.8 337.7C452.1 337.3 452.2 337.9 454.7 337.9C457.1 337.9 457.1 337.5 459.6 337.7C462.0 338.0 462.0 338.2 464.5 338.9C466.9 339.5 467.0 340.5 469.4 340.3C471.9 340.1 471.7 338.9 474.2 338.1C476.6 337.3 476.8 336.9 479.1 337.2C481.7 337.4 481.5 338.4 484.0 339.1C486.4 339.7 486.6 339.1 488.9 339.9C491.5 340.7 491.5 342.4 493.8 342.2C496.4 342.0 496.1 340.0 498.7 338.9C501.0 338.0 501.2 338.0 503.6 338.1C506.1 338.3 506.6 338.0 508.5 339.4C511.5 341.7 511.2 346.0 513.4 345.6C516.1 345.1 515.2 340.9 518.3 337.6C520.1 335.6 521.1 334.6 523.2 335.1C526.0 335.8 525.7 340.1 528.1 340.0C530.6 340.0 530.2 336.7 533.0 334.9C535.1 333.7 536.8 332.4 537.9 334.1C541.7 340.0 539.0 343.8 542.8 350.2C543.9 352.1 546.5 352.4 547.7 350.6C551.4 345.3 549.0 340.5 552.6 336.2C553.9 334.6 555.0 338.5 557.5 338.8C559.9 339.1 559.9 337.6 562.4 337.5C564.8 337.4 564.9 338.7 567.3 338.4C569.8 338.1 570.9 334.8 572.2 336.4C575.8 340.6 573.5 345.0 577.1 349.9C578.4 351.6 580.5 351.1 582.0 349.5C585.4 345.8 584.1 344.2 586.9 339.3C589.0 335.5 590.7 336.2 591.8 332.0C595.6 317.6 595.7 302.1 596.7 302.1C597.9 303.1 597.5 326.2 601.6 340.1C602.4 342.7 604.8 334.0 606.5 335.2C609.7 337.3 607.9 342.6 611.4 346.9C612.8 348.5 614.5 348.3 616.3 347.1C619.4 345.1 618.8 343.8 621.2 340.4C623.7 337.0 623.1 334.8 626.1 333.4C628.0 332.5 629.0 334.0 631.0 335.8C633.9 338.5 632.8 340.3 635.9 342.4C637.7 343.6 639.0 341.1 640.8 342.4C643.9 344.7 642.8 348.5 645.7 349.5C647.7 350.2 648.4 348.0 650.6 345.9C653.3 343.1 654.5 343.5 655.5 339.8C659.4 324.5 659.6 305.5 660.4 307.8C661.8 312.3 665.3 370.7 665.3 370.7L665.3 371.7 L229.3 371.7 Z" fill="#95a1d9"/>
<path d="M229.3 353.5C229.3 353.5 231.7 355.1 234.2 355.3C236.6 355.5 236.7 354.6 239.1 354.4C241.6 354.1 241.6 354.5 244.0 354.4C246.5 354.2 246.5 353.8 248.9 353.7C251.4 353.5 251.4 353.7 253.8 353.7C256.3 353.6 256.3 353.5 258.7 353.6C261.2 353.6 261.2 353.7 263.6 353.7C266.1 353.8 266.1 353.3 268.5 353.7C271.0 354.0 270.9 355.0 273.4 355.2C275.8 355.4 275.9 354.6 278.3 354.4C280.8 354.1 280.8 354.4 283.2 354.4C285.7 354.3 285.7 354.3 288.1 354.1C290.6 353.9 290.6 353.6 293.0 353.7C295.5 353.9 295.4 354.5 297.9 354.7C300.3 355.0 300.4 354.9 302.8 354.6C305.3 354.2 305.2 353.4 307.7 353.3C310.1 353.1 310.2 353.9 312.6 354.0C315.1 354.1 315.1 353.9 317.5 353.7C320.0 353.6 320.0 353.3 322.4 353.4C324.9 353.6 324.8 354.2 327.3 354.4C329.7 354.5 329.8 354.0 332.2 354.0C334.7 354.0 334.7 354.6 337.1 354.4C339.6 354.1 339.5 353.2 342.0 353.1C344.4 353.0 344.5 353.9 346.9 353.9C349.3 353.9 349.4 353.2 351.8 353.2C354.3 353.2 354.2 353.8 356.7 353.9C359.1 354.1 359.1 353.7 361.6 353.7C364.0 353.8 364.1 354.2 366.5 354.1C369.0 354.0 368.9 353.6 371.4 353.4C373.8 353.2 373.9 353.2 376.3 353.4C378.8 353.6 378.7 354.1 381.2 354.3C383.6 354.4 383.6 354.2 386.1 354.0C388.5 353.9 388.5 353.6 391.0 353.6C393.4 353.6 393.4 353.7 395.9 353.9C398.3 354.1 398.3 354.4 400.8 354.4C403.2 354.4 403.2 353.9 405.7 353.9C408.1 353.9 408.1 354.3 410.6 354.3C413.0 354.3 413.0 353.7 415.5 353.7C417.9 353.8 417.9 354.5 420.4 354.4C422.8 354.4 422.8 353.9 425.3 353.6C427.7 353.3 427.8 353.0 430.2 353.2C432.7 353.4 432.6 354.3 435.1 354.5C437.5 354.6 437.5 353.8 440.0 353.9C442.4 353.9 442.4 354.7 444.9 354.7C447.3 354.6 447.3 354.0 449.8 353.7C452.2 353.5 452.2 353.8 454.7 353.8C457.1 353.8 457.1 353.6 459.6 353.7C462.0 353.9 462.0 354.0 464.5 354.4C466.9 354.7 466.9 355.2 469.4 355.1C471.8 355.0 471.8 354.3 474.2 353.9C476.7 353.5 476.7 353.3 479.1 353.5C481.6 353.6 481.6 354.1 484.0 354.5C486.5 354.8 486.5 354.5 488.9 354.9C491.4 355.3 491.4 356.0 493.8 355.9C496.3 355.8 496.2 354.9 498.7 354.4C501.1 353.9 501.2 353.9 503.6 354.0C506.1 354.0 506.2 353.9 508.5 354.7C511.1 355.5 511.1 357.4 513.4 357.2C516.0 356.9 515.7 355.0 518.3 353.7C520.6 352.6 520.9 352.1 523.2 352.4C525.8 352.7 525.7 355.0 528.1 354.9C530.6 354.9 530.4 353.1 533.0 352.3C535.3 351.5 536.3 350.5 537.9 351.8C541.2 354.5 539.6 357.4 542.8 360.3C544.5 361.8 546.0 361.9 547.7 360.6C550.9 358.2 549.5 354.9 552.6 352.9C554.4 351.8 555.0 354.1 557.5 354.3C559.9 354.5 560.0 353.7 562.4 353.6C564.9 353.6 564.9 354.2 567.3 354.1C569.8 353.9 570.4 351.9 572.2 353.0C575.3 355.0 574.0 358.0 577.1 360.2C578.9 361.5 580.0 361.1 582.0 360.0C584.9 358.3 584.3 357.1 586.9 354.6C589.2 352.4 590.5 353.4 591.8 350.7C595.4 343.6 595.7 334.9 596.7 334.9C597.9 335.5 597.7 348.1 601.6 355.0C602.6 356.9 604.5 351.7 606.5 352.4C609.4 353.4 608.4 356.6 611.4 358.6C613.3 359.8 614.1 359.5 616.3 358.7C619.0 357.8 618.8 357.0 621.2 355.2C623.7 353.3 623.4 352.1 626.1 351.5C628.3 350.9 628.7 351.6 631.0 352.7C633.6 354.0 633.2 355.2 635.9 356.2C638.1 357.0 638.6 355.4 640.8 356.2C643.5 357.3 643.0 359.5 645.7 360.0C647.9 360.4 648.3 359.3 650.6 358.0C653.2 356.7 654.3 357.4 655.5 354.9C659.2 347.3 659.6 336.7 660.4 337.9C661.8 340.3 665.3 371.2 665.3 371.2L665.3 371.7 L229.3 371.7 Z" fill="#60b1ea"/>
<path d="M229.3 353.5C229.3 353.5 231.7 355.1 234.2 355.3C236.6 355.5 236.7 354.6 239.1 354.4C241.6 354.1 241.6 354.5 244.0 354.4C246.5 354.2 246.5 353.8 248.9 353.7C251.4 353.5 251.4 353.7 253.8 353.7C256.3 353.6 256.3 353.5 258.7 353.6C261.2 353.6 261.2 353.7 263.6 353.7C266.1 353.8 266.1 353.3 268.5 353.7C271.0 354.0 270.9 355.0 273.4 355.2C275.8 355.4 275.9 354.6 278.3 354.4C280.8 354.1 280.8 354.4 283.2 354.4C285.7 354.3 285.7 354.3 288.1 354.1C290.6 353.9 290.6 353.6 293.0 353.7C295.5 353.9 295.4 354.5 297.9 354.7C300.3 355.0 300.4 354.9 302.8 354.6C305.3 354.2 305.2 353.4 307.7 353.3C310.1 353.1 310.2 353.9 312.6 354.0C315.1 354.1 315.1 353.9 317.5 353.7C320.0 353.6 320.0 353.3 322.4 353.4C324.9 353.6 324.8 354.2 327.3 354.4C329.7 354.5 329.8 354.0 332.2 354.0C334.7 354.0 334.7 354.6 337.1 354.4C339.6 354.1 339.5 353.2 342.0 353.1C344.4 353.0 344.5 353.9 346.9 353.9C349.3 353.9 349.4 353.2 351.8 353.2C354.3 353.2 354.2 353.8 356.7 353.9C359.1 354.1 359.1 353.7 361.6 353.7C364.0 353.8 364.1 354.2 366.5 354.1C369.0 354.0 368.9 353.6 371.4 353.4C373.8 353.2 373.9 353.2 376.3 353.4C378.8 353.6 378.7 354.1 381.2 354.3C383.6 354.4 383.6 354.2 386.1 354.0C388.5 353.9 388.5 353.6 391.0 353.6C393.4 353.6 393.4 353.7 395.9 353.9C398.3 354.1 398.3 354.4 400.8 354.4C403.2 354.4 403.2 353.9 405.7 353.9C408.1 353.9 408.1 354.3 410.6 354.3C413.0 354.3 413.0 353.7 415.5 353.7C417.9 353.8 417.9 354.5 420.4 354.4C422.8 354.4 422.8 353.9 425.3 353.6C427.7 353.3 427.8 353.0 430.2 353.2C432.7 353.4 432.6 354.3 435.1 354.5C437.5 354.6 437.5 353.8 440.0 353.9C442.4 353.9 442.4 354.7 444.9 354.7C447.3 354.6 447.3 354.0 449.8 353.7C452.2 353.5 452.2 353.8 454.7 353.8C457.1 353.8 457.1 353.6 459.6 353.7C462.0 353.9 462.0 354.0 464.5 354.4C466.9 354.7 466.9 355.2 469.4 355.1C471.8 355.0 471.8 354.3 474.2 353.9C476.7 353.5 476.7 353.3 479.1 353.5C481.6 353.6 481.6 354.1 484.0 354.5C486.5 354.8 486.5 354.5 488.9 354.9C491.4 355.3 491.4 356.0 493.8 355.9C496.3 355.8 496.2 354.9 498.7 354.4C501.1 353.9 501.2 353.9 503.6 354.0C506.1 354.0 506.2 353.9 508.5 354.7C511.1 355.5 511.1 357.4 513.4 357.2C516.0 356.9 515.7 355.0 518.3 353.7C520.6 352.6 520.9 352.1 523.2 352.4C525.8 352.7 525.7 355.0 528.1 354.9C530.6 354.9 530.4 353.1 533.0 352.3C535.3 351.5 536.3 350.5 537.9 351.8C541.2 354.5 539.6 357.4 542.8 360.3C544.5 361.8 546.0 361.9 547.7 360.6C550.9 358.2 549.5 354.9 552.6 352.9C554.4 351.8 555.0 354.1 557.5 354.3C559.9 354.5 560.0 353.7 562.4 353.6C564.9 353.6 564.9 354.2 567.3 354.1C569.8 353.9 570.4 351.9 572.2 353.0C575.3 355.0 574.0 358.0 577.1 360.2C578.9 361.5 580.0 361.1 582.0 360.0C584.9 358.3 584.3 357.1 586.9 354.6C589.2 352.4 590.5 353.4 591.8 350.7C595.4 343.6 595.7 334.9 596.7 334.9C597.9 335.5 597.7 348.1 601.6 355.0C602.6 356.9 604.5 351.7 606.5 352.4C609.4 353.4 608.4 356.6 611.4 358.6C613.3 359.8 614.1 359.5 616.3 358.7C619.0 357.8 618.8 357.0 621.2 355.2C623.7 353.3 623.4 352.1 626.1 351.5C628.3 350.9 628.7 351.6 631.0 352.7C633.6 354.0 633.2 355.2 635.9 356.2C638.1 357.0 638.6 355.4 640.8 356.2C643.5 357.3 643.0 359.5 645.7 360.0C647.9 360.4 648.3 359.3 650.6 358.0C653.2 356.7 654.3 357.4 655.5 354.9C659.2 347.3 659.6 336.7 660.4 337.9C661.8 340.3 665.3 371.2 665.3 371.2" fill="none" stroke="#2e97e6" stroke-width="0.9"/>
<path d="M229.3 337.3C229.3 337.3 231.6 340.3 234.2 340.7C236.5 341.1 236.6 339.4 239.1 338.9C241.5 338.4 241.6 339.2 244.0 338.9C246.5 338.6 246.5 337.9 248.9 337.6C251.4 337.3 251.4 337.7 253.8 337.6C256.3 337.5 256.3 337.3 258.7 337.4C261.2 337.4 261.2 337.7 263.6 337.7C266.1 337.8 266.3 337.0 268.5 337.6C271.2 338.3 270.9 340.2 273.4 340.5C275.8 340.8 275.8 339.3 278.3 338.9C280.7 338.5 280.8 339.0 283.2 338.9C285.7 338.8 285.7 338.7 288.1 338.4C290.6 338.1 290.7 337.4 293.0 337.7C295.5 338.0 295.4 339.2 297.9 339.6C300.3 340.0 300.5 340.0 302.8 339.3C305.4 338.6 305.2 337.2 307.7 336.9C310.1 336.6 310.1 337.9 312.6 338.2C315.0 338.4 315.1 338.0 317.5 337.7C320.0 337.5 320.0 336.8 322.4 337.1C324.9 337.4 324.8 338.6 327.3 338.9C329.7 339.2 329.8 338.3 332.2 338.3C334.7 338.3 334.8 339.3 337.1 338.9C339.7 338.4 339.5 336.8 342.0 336.5C344.4 336.3 344.4 338.0 346.9 338.0C349.3 338.0 349.4 336.6 351.8 336.6C354.3 336.7 354.2 337.8 356.7 338.1C359.1 338.3 359.2 337.7 361.6 337.7C364.1 337.8 364.1 338.6 366.5 338.4C369.0 338.2 368.9 337.4 371.4 337.1C373.8 336.7 373.9 336.7 376.3 337.1C378.8 337.5 378.7 338.4 381.2 338.7C383.6 339.0 383.6 338.6 386.1 338.3C388.5 338.0 388.5 337.5 391.0 337.5C393.4 337.4 393.4 337.6 395.9 338.0C398.3 338.3 398.3 338.9 400.8 338.9C403.2 338.9 403.2 338.0 405.7 338.0C408.1 338.0 408.1 338.9 410.6 338.8C413.0 338.7 413.0 337.7 415.5 337.7C417.9 337.8 417.9 339.1 420.4 339.1C422.8 339.0 422.8 338.1 425.3 337.5C427.7 336.9 427.8 336.3 430.2 336.6C432.7 337.1 432.5 338.7 435.1 339.1C437.4 339.4 437.5 337.9 440.0 338.0C442.4 338.1 442.4 339.6 444.9 339.5C447.3 339.4 447.2 338.2 449.8 337.7C452.1 337.3 452.2 337.9 454.7 337.9C457.1 337.9 457.1 337.5 459.6 337.7C462.0 338.0 462.0 338.2 464.5 338.9C466.9 339.5 467.0 340.5 469.4 340.3C471.9 340.1 471.7 338.9 474.2 338.1C476.6 337.3 476.8 336.9 479.1 337.2C481.7 337.4 481.5 338.4 484.0 339.1C486.4 339.7 486.6 339.1 488.9 339.9C491.5 340.7 491.5 342.4 493.8 342.2C496.4 342.0 496.1 340.0 498.7 338.9C501.0 338.0 501.2 338.0 503.6 338.1C506.1 338.3 506.6 338.0 508.5 339.4C511.5 341.7 511.2 346.0 513.4 345.6C516.1 345.1 515.2 340.9 518.3 337.6C520.1 335.6 521.1 334.6 523.2 335.1C526.0 335.8 525.7 340.1 528.1 340.0C530.6 340.0 530.2 336.7 533.0 334.9C535.1 333.7 536.8 332.4 537.9 334.1C541.7 340.0 539.0 343.8 542.8 350.2C543.9 352.1 546.5 352.4 547.7 350.6C551.4 345.3 549.0 340.5 552.6 336.2C553.9 334.6 555.0 338.5 557.5 338.8C559.9 339.1 559.9 337.6 562.4 337.5C564.8 337.4 564.9 338.7 567.3 338.4C569.8 338.1 570.9 334.8 572.2 336.4C575.8 340.6 573.5 345.0 577.1 349.9C578.4 351.6 580.5 351.1 582.0 349.5C585.4 345.8 584.1 344.2 586.9 339.3C589.0 335.5 590.7 336.2 591.8 332.0C595.6 317.6 595.7 302.1 596.7 302.1C597.9 303.1 597.5 326.2 601.6 340.1C602.4 342.7 604.8 334.0 606.5 335.2C609.7 337.3 607.9 342.6 611.4 346.9C612.8 348.5 614.5 348.3 616.3 347.1C619.4 345.1 618.8 343.8 621.2 340.4C623.7 337.0 623.1 334.8 626.1 333.4C628.0 332.5 629.0 334.0 631.0 335.8C633.9 338.5 632.8 340.3 635.9 342.4C637.7 343.6 639.0 341.1 640.8 342.4C643.9 344.7 642.8 348.5 645.7 349.5C647.7 350.2 648.4 348.0 650.6 345.9C653.3 343.1 654.5 343.5 655.5 339.8C659.4 324.5 659.6 305.5 660.4 307.8C661.8 312.3 665.3 370.7 665.3 370.7" fill="none" stroke="#6f7ec8" stroke-width="0.9"/>
<path d="M229.3 323.6C229.3 323.6 231.5 327.7 234.2 328.3C236.4 328.8 236.6 326.4 239.1 325.8C241.4 325.2 241.7 326.2 244.0 325.8C246.6 325.3 246.4 324.4 248.9 324.0C251.3 323.5 251.4 324.0 253.8 324.0C256.3 323.9 256.3 323.6 258.7 323.6C261.2 323.7 261.2 324.1 263.6 324.2C266.1 324.2 266.4 323.1 268.5 324.0C271.3 325.1 270.8 327.5 273.4 328.0C275.7 328.4 275.8 326.4 278.3 325.8C280.7 325.2 280.8 325.9 283.2 325.8C285.7 325.6 285.7 325.5 288.1 325.1C290.6 324.7 290.7 323.7 293.0 324.1C295.6 324.5 295.3 326.2 297.9 326.8C300.2 327.3 300.6 327.2 302.8 326.3C305.5 325.3 305.1 323.4 307.7 322.9C310.0 322.6 310.1 324.4 312.6 324.7C315.0 325.0 315.1 324.5 317.5 324.2C320.0 323.8 320.1 322.9 322.4 323.2C325.0 323.7 324.7 325.3 327.3 325.8C329.6 326.1 329.8 324.9 332.2 324.9C334.7 324.9 334.9 326.3 337.1 325.8C339.8 325.1 339.4 322.8 342.0 322.5C344.3 322.2 344.4 324.5 346.9 324.5C349.3 324.5 349.4 322.6 351.8 322.6C354.3 322.7 354.2 324.2 356.7 324.6C359.1 325.0 359.2 324.0 361.6 324.2C364.1 324.3 364.1 325.3 366.5 325.1C369.0 324.9 368.9 323.7 371.4 323.2C373.8 322.8 374.0 322.7 376.3 323.2C378.9 323.8 378.6 325.0 381.2 325.5C383.5 325.9 383.7 325.3 386.1 324.9C388.6 324.5 388.5 323.9 391.0 323.8C393.4 323.7 393.5 324.0 395.9 324.5C398.4 325.0 398.3 325.8 400.8 325.8C403.2 325.8 403.2 324.5 405.7 324.5C408.1 324.5 408.1 325.7 410.6 325.6C413.0 325.6 413.1 324.1 415.5 324.2C417.9 324.2 418.0 326.1 420.4 326.0C422.9 325.9 422.7 324.6 425.3 323.8C427.6 322.9 427.9 322.1 430.2 322.6C432.8 323.2 432.4 325.5 435.1 326.0C437.3 326.5 437.6 324.4 440.0 324.5C442.5 324.7 442.4 326.7 444.9 326.6C447.3 326.5 447.2 324.8 449.8 324.2C452.1 323.6 452.2 324.3 454.7 324.3C457.1 324.3 457.2 323.8 459.6 324.2C462.1 324.5 462.0 324.9 464.5 325.8C466.9 326.7 467.0 328.0 469.4 327.8C471.9 327.5 471.6 325.8 474.2 324.6C476.5 323.6 476.8 323.0 479.1 323.4C481.7 323.7 481.5 325.0 484.0 326.0C486.4 326.9 486.5 326.7 488.9 327.2C491.4 327.7 491.5 328.3 493.8 328.0C496.4 327.7 496.2 326.7 498.7 325.8C501.1 325.0 501.2 324.5 503.6 324.7C506.1 324.9 506.9 324.7 508.5 326.5C511.8 330.3 511.2 336.6 513.4 336.0C516.1 335.3 515.0 329.2 518.3 323.9C519.9 321.5 521.2 319.8 523.2 320.5C526.1 321.5 525.7 327.4 528.1 327.3C530.6 327.3 529.9 322.8 533.0 320.2C534.8 318.7 537.0 317.2 537.9 319.1C541.9 327.9 538.8 332.1 542.8 341.6C543.7 343.7 546.8 344.1 547.7 342.2C551.7 334.3 548.8 328.4 552.6 322.0C553.7 320.1 554.9 325.1 557.5 325.6C559.8 326.1 559.9 323.9 562.4 323.8C564.8 323.7 565.0 325.4 567.3 325.1C569.9 324.6 571.1 320.4 572.2 322.2C576.0 328.5 573.2 333.9 577.1 341.2C578.1 343.1 580.8 342.5 582.0 340.7C585.7 335.0 584.1 333.4 586.9 326.3C589.0 321.1 590.8 321.7 591.8 316.2C595.7 295.6 595.7 274.3 596.7 274.3C597.9 275.7 597.4 307.6 601.6 327.5C602.3 330.7 604.9 319.0 606.5 320.5C609.8 323.7 607.6 330.4 611.4 336.9C612.5 338.8 614.7 338.7 616.3 337.2C619.6 334.2 618.8 332.6 621.2 327.9C623.7 323.0 622.9 320.2 626.1 318.1C627.8 317.0 629.2 319.1 631.0 321.4C634.1 325.4 632.5 327.5 635.9 330.7C637.4 332.1 639.3 329.1 640.8 330.7C644.2 334.1 642.7 339.2 645.7 340.7C647.6 341.6 648.5 338.4 650.6 335.5C653.4 331.6 654.6 331.8 655.5 327.1C659.5 305.2 659.6 279.1 660.4 282.3" fill="none" stroke="#f9cb55" stroke-width="0.9"/>
<path d="M229.3 309.1C229.3 309.1 231.5 314.4 234.2 315.2C236.4 315.8 236.5 312.8 239.1 311.9C241.4 311.2 241.7 312.5 244.0 311.9C246.6 311.3 246.4 310.2 248.9 309.6C251.3 309.0 251.4 309.7 253.8 309.6C256.3 309.5 256.3 309.1 258.7 309.2C261.2 309.2 261.2 309.7 263.6 309.8C266.1 309.9 266.6 308.6 268.5 309.6C271.5 311.1 270.7 314.2 273.4 314.9C275.6 315.4 275.7 312.7 278.3 311.9C280.6 311.2 280.8 312.1 283.2 311.9C285.7 311.7 285.7 311.6 288.1 311.1C290.6 310.5 290.8 309.2 293.0 309.7C295.7 310.3 295.2 312.4 297.9 313.3C300.1 313.9 300.7 313.8 302.8 312.7C305.6 311.3 305.0 308.8 307.7 308.3C309.9 307.8 310.1 310.2 312.6 310.6C315.0 311.0 315.1 310.3 317.5 309.8C320.0 309.3 320.2 308.2 322.4 308.7C325.1 309.2 324.7 311.4 327.3 311.9C329.6 312.4 329.8 310.8 332.2 310.8C334.7 310.8 335.0 312.6 337.1 311.9C339.9 311.0 339.4 308.1 342.0 307.6C344.3 307.3 344.4 310.2 346.9 310.3C349.3 310.3 349.4 307.8 351.8 307.8C354.3 307.9 354.1 309.9 356.7 310.4C359.0 310.9 359.2 309.7 361.6 309.8C364.1 310.0 364.1 311.4 366.5 311.1C369.0 310.7 368.8 309.3 371.4 308.6C373.7 308.0 374.0 307.9 376.3 308.6C378.9 309.4 378.6 311.0 381.2 311.6C383.5 312.1 383.7 311.4 386.1 310.8C388.6 310.2 388.5 309.5 391.0 309.3C393.4 309.2 393.5 309.7 395.9 310.3C398.4 311.0 398.3 311.9 400.8 311.9C403.2 311.9 403.2 310.3 405.7 310.3C408.1 310.3 408.2 311.9 410.6 311.8C413.1 311.7 413.1 309.7 415.5 309.8C418.0 310.0 418.0 312.4 420.4 312.2C422.9 312.1 422.7 310.5 425.3 309.3C427.6 308.3 428.0 307.2 430.2 307.8C432.9 308.7 432.3 311.6 435.1 312.3C437.2 312.8 437.6 310.1 440.0 310.3C442.5 310.5 442.5 313.2 444.9 313.0C447.4 312.9 447.1 310.6 449.8 309.8C452.0 309.2 452.2 310.1 454.7 310.1C457.1 310.1 457.2 309.4 459.6 309.8C462.1 310.3 462.1 310.8 464.5 311.9C467.0 313.1 467.1 314.9 469.4 314.5C472.0 314.1 471.5 312.0 474.2 310.4C476.4 309.2 476.9 308.4 479.1 308.8C481.8 309.3 481.4 310.9 484.0 312.3C486.3 313.4 486.5 313.6 488.9 313.8C491.4 313.9 491.4 313.4 493.8 313.0C496.3 312.6 496.3 312.6 498.7 312.0C501.2 311.4 501.3 310.3 503.6 310.6C506.2 310.8 507.2 310.8 508.5 312.9C512.1 318.5 511.2 326.8 513.4 326.0C516.1 325.1 514.8 317.1 518.3 309.5C519.7 306.6 521.3 304.2 523.2 305.1C526.2 306.4 525.7 314.1 528.1 314.0C530.6 313.9 529.7 308.3 533.0 304.7C534.6 303.0 537.2 301.2 537.9 303.3C542.1 315.1 538.6 319.7 542.8 332.6C543.5 334.7 547.0 335.3 547.7 333.3C551.9 322.5 548.7 315.6 552.6 307.0C553.6 304.8 554.8 311.1 557.5 311.8C559.7 312.3 559.9 309.6 562.4 309.4C564.8 309.2 565.1 311.5 567.3 311.0C570.0 310.5 571.3 305.3 572.2 307.3C576.2 315.8 573.0 322.1 577.1 332.1C577.9 334.0 581.0 333.3 582.0 331.3C585.9 323.6 584.1 321.9 586.9 312.7C589.0 305.9 590.8 306.4 591.8 299.4C595.7 272.5 595.8 245.0 596.7 245.0C597.9 246.8 597.3 288.0 601.6 314.2C602.2 318.1 604.9 303.2 606.5 305.1C609.8 309.3 607.4 317.6 611.4 326.5C612.3 328.5 615.0 328.5 616.3 326.9C619.9 322.6 618.8 320.8 621.2 314.7C623.7 308.4 622.8 304.9 626.1 302.0C627.7 300.6 629.4 303.5 631.0 306.3C634.2 311.7 632.3 313.9 635.9 318.3C637.2 320.0 639.5 316.6 640.8 318.3C644.4 323.1 642.6 329.3 645.7 331.3C647.5 332.5 648.6 328.2 650.6 324.6C653.5 319.4 654.6 319.6 655.5 313.7C659.5 284.9 659.6 251.2 660.4 255.4" fill="none" stroke="#f3ad7c" stroke-width="0.9"/>
<path d="M229.3 299.9C229.3 299.9 231.4 306.0 234.2 306.9C236.3 307.6 236.4 304.2 239.1 303.1C241.3 302.3 241.8 303.8 244.0 303.1C246.7 302.4 246.3 301.2 248.9 300.4C251.2 299.8 251.4 300.6 253.8 300.4C256.3 300.3 256.3 299.9 258.7 300.0C261.2 300.1 261.2 300.6 263.6 300.7C266.1 300.9 266.6 299.3 268.5 300.4C271.5 302.2 270.7 305.8 273.4 306.5C275.6 307.1 275.6 304.1 278.3 303.1C280.5 302.4 280.8 303.4 283.2 303.1C285.7 302.9 285.7 302.8 288.1 302.1C290.6 301.5 290.8 300.1 293.0 300.6C295.7 301.3 295.2 303.7 297.9 304.7C300.1 305.4 300.8 305.2 302.8 304.0C305.7 302.3 305.0 299.6 307.7 298.9C309.9 298.4 310.0 301.1 312.6 301.6C314.9 302.0 315.1 301.3 317.5 300.7C320.0 300.2 320.2 298.9 322.4 299.4C325.1 300.1 324.6 302.5 327.3 303.1C329.5 303.7 329.8 301.9 332.2 301.9C334.7 301.9 335.0 303.9 337.1 303.1C339.9 302.1 339.3 298.7 342.0 298.2C344.2 297.8 344.4 301.2 346.9 301.3C349.3 301.3 349.4 298.4 351.8 298.5C354.3 298.5 354.1 300.8 356.7 301.4C359.0 302.0 359.2 300.6 361.6 300.7C364.1 300.9 364.2 302.5 366.5 302.1C369.1 301.8 368.8 300.1 371.4 299.3C373.7 298.7 374.1 298.6 376.3 299.3C379.0 300.3 378.5 302.0 381.2 302.7C383.4 303.3 383.7 302.5 386.1 301.9C388.6 301.2 388.5 300.3 391.0 300.2C393.4 300.0 393.5 300.5 395.9 301.3C398.4 302.0 398.3 303.1 400.8 303.1C403.2 303.1 403.2 301.3 405.7 301.3C408.1 301.2 408.2 303.1 410.6 303.0C413.1 302.8 413.1 300.6 415.5 300.7C418.0 300.9 418.0 303.6 420.4 303.5C422.9 303.3 422.7 301.5 425.3 300.2C427.6 299.0 428.1 297.7 430.2 298.5C433.0 299.4 432.3 302.8 435.1 303.5C437.2 304.2 437.6 301.1 440.0 301.3C442.5 301.5 442.5 304.6 444.9 304.4C447.4 304.3 447.0 301.7 449.8 300.7C451.9 300.0 452.2 301.0 454.7 301.0C457.1 301.0 457.2 300.2 459.6 300.7C462.1 301.3 462.1 301.8 464.5 303.1C467.0 304.5 467.1 306.5 469.4 306.1C472.0 305.7 471.5 303.3 474.2 301.4C476.4 300.0 476.9 299.1 479.1 299.6C481.8 300.1 481.4 302.0 484.0 303.5C486.3 304.8 486.5 304.4 488.9 305.2C491.4 306.1 491.6 307.5 493.8 307.0C496.5 306.5 496.1 304.7 498.7 303.3C501.0 302.0 501.3 301.3 503.6 301.6C506.2 301.8 507.3 302.0 508.5 304.3C512.2 311.2 511.2 320.9 513.4 320.0C516.1 318.9 514.7 309.5 518.3 300.4C519.6 297.2 521.3 294.3 523.2 295.3C526.2 296.9 525.7 305.6 528.1 305.5C530.6 305.4 529.6 299.1 533.0 294.9C534.5 293.0 537.3 291.1 537.9 293.2C542.2 307.1 538.5 311.8 542.8 326.8C543.4 329.0 547.0 329.8 547.7 327.7C551.9 315.1 548.7 307.4 552.6 297.5C553.6 295.1 554.7 302.2 557.5 303.0C559.6 303.6 559.9 300.4 562.4 300.2C564.8 300.0 565.1 302.6 567.3 302.1C570.0 301.4 571.3 295.7 572.2 297.9C576.2 307.7 572.9 314.5 577.1 326.2C577.8 328.3 581.1 327.4 582.0 325.4C586.0 316.3 584.1 314.6 586.9 304.0C589.0 296.3 590.8 296.7 591.8 288.8C595.7 257.9 595.8 226.4 596.7 226.4C597.9 228.5 597.3 275.6 601.6 305.8C602.2 310.1 604.9 293.1 606.5 295.4C609.8 300.2 607.3 309.4 611.4 319.8C612.2 321.9 615.1 322.0 616.3 320.3C620.0 315.2 618.8 313.3 621.2 306.4C623.7 299.1 622.7 295.1 626.1 291.7C627.6 290.2 629.4 293.6 631.0 296.6C634.3 303.0 632.2 305.3 635.9 310.5C637.1 312.2 639.6 308.7 640.8 310.5C644.5 316.1 642.6 323.1 645.7 325.4C647.5 326.7 648.6 321.8 650.6 317.7C653.5 311.7 654.7 311.8 655.5 305.1C659.6 272.1 659.6 233.5 660.4 238.3" fill="none" stroke="#f28a86" stroke-width="0.9"/>
<path d="M229.3 293.2C229.3 293.2 231.4 299.8 234.2 300.9C236.3 301.6 236.4 297.9 239.1 296.7C241.3 295.8 241.8 297.4 244.0 296.7C246.7 295.9 246.3 294.5 248.9 293.7C251.2 293.1 251.4 293.9 253.8 293.7C256.3 293.6 256.3 293.2 258.7 293.2C261.2 293.3 261.2 293.9 263.6 294.1C266.1 294.2 266.7 292.6 268.5 293.7C271.6 295.7 270.6 299.6 273.4 300.4C275.5 301.0 275.6 297.7 278.3 296.7C280.5 295.9 280.8 297.0 283.2 296.7C285.7 296.4 285.7 296.3 288.1 295.6C290.6 294.9 290.9 293.3 293.0 293.9C295.8 294.7 295.1 297.3 297.9 298.4C300.0 299.2 300.9 298.9 302.8 297.7C305.8 295.8 305.0 292.8 307.7 292.1C309.8 291.5 310.0 294.5 312.6 295.0C314.9 295.5 315.1 294.7 317.5 294.1C320.0 293.5 320.2 292.0 322.4 292.6C325.1 293.3 324.6 295.9 327.3 296.7C329.5 297.3 329.8 295.3 332.2 295.3C334.7 295.3 335.1 297.5 337.1 296.7C340.0 295.5 339.3 291.9 342.0 291.3C344.2 290.9 344.4 294.6 346.9 294.6C349.3 294.7 349.4 291.5 351.8 291.6C354.3 291.6 354.0 294.2 356.7 294.8C358.9 295.4 359.2 293.9 361.6 294.1C364.1 294.3 364.2 296.0 366.5 295.6C369.1 295.2 368.7 293.4 371.4 292.5C373.6 291.8 374.1 291.7 376.3 292.5C379.0 293.6 378.5 295.5 381.2 296.2C383.4 296.9 383.7 296.0 386.1 295.3C388.6 294.6 388.5 293.6 391.0 293.4C393.4 293.3 393.5 293.8 395.9 294.6C398.4 295.5 398.3 296.7 400.8 296.7C403.2 296.7 403.2 294.7 405.7 294.6C408.1 294.6 408.2 296.6 410.6 296.5C413.1 296.4 413.1 293.9 415.5 294.1C418.0 294.2 418.0 297.2 420.4 297.1C422.9 296.9 422.6 294.9 425.3 293.4C427.5 292.2 428.1 290.8 430.2 291.6C433.0 292.7 432.3 296.3 435.1 297.1C437.2 297.8 437.6 294.4 440.0 294.6C442.5 294.9 442.5 298.2 444.9 298.1C447.4 298.0 447.0 295.1 449.8 294.1C451.9 293.3 452.2 294.4 454.7 294.4C457.1 294.4 457.3 293.5 459.6 294.1C462.2 294.7 462.1 295.3 464.5 296.7C467.0 298.2 467.1 300.4 469.4 300.0C472.0 299.4 471.4 296.9 474.2 294.8C476.3 293.3 477.0 292.3 479.1 292.8C481.9 293.4 481.3 295.4 484.0 297.1C486.2 298.5 486.6 297.8 488.9 299.0C491.5 300.3 491.7 302.5 493.8 302.0C496.6 301.4 495.9 298.8 498.7 296.8C500.8 295.3 501.3 294.7 503.6 295.0C506.2 295.3 507.3 295.5 508.5 298.0C512.2 305.1 511.3 315.0 513.4 314.0C516.2 312.8 514.7 303.2 518.3 293.7C519.6 290.3 521.4 287.1 523.2 288.1C526.3 289.8 525.7 299.4 528.1 299.3C530.6 299.1 529.6 292.4 533.0 287.7C534.5 285.7 537.3 283.7 537.9 285.8C542.2 301.1 538.5 306.0 542.8 322.6C543.4 324.8 547.1 325.7 547.7 323.6C552.0 309.6 548.6 301.5 552.6 290.5C553.5 287.9 554.7 295.6 557.5 296.5C559.6 297.1 559.9 293.7 562.4 293.5C564.8 293.3 565.2 296.1 567.3 295.5C570.0 294.8 571.3 288.6 572.2 290.9C576.2 301.8 572.9 309.0 577.1 322.0C577.8 324.0 581.2 323.1 582.0 321.0C586.1 311.0 584.1 309.2 586.9 297.7C589.0 289.2 590.8 289.6 591.8 281.0C595.7 247.1 595.8 212.7 596.7 212.7C597.9 215.0 597.3 266.6 601.6 299.6C602.2 304.3 605.0 285.8 606.5 288.2C609.9 293.5 607.2 303.4 611.4 314.9C612.1 317.0 615.1 317.2 616.3 315.4C620.0 309.8 618.8 307.8 621.2 300.2C623.7 292.2 622.7 287.9 626.1 284.2C627.6 282.6 629.4 286.4 631.0 289.6C634.3 296.6 632.1 298.9 635.9 304.7C637.0 306.5 639.7 302.9 640.8 304.7C644.6 311.0 642.6 318.5 645.7 321.0C647.5 322.5 648.6 317.0 650.6 312.6C653.5 306.0 654.7 306.1 655.5 298.9C659.6 262.6 659.6 220.5 660.4 225.7" fill="none" stroke="#e46288" stroke-width="0.9"/>
<path d="M229.3 277.2C229.3 277.2 231.3 285.2 234.2 286.5C236.2 287.3 236.3 282.9 239.1 281.5C241.2 280.4 241.9 282.2 244.0 281.5C246.7 280.5 246.2 278.9 248.9 277.9C251.1 277.1 251.4 278.1 253.8 277.9C256.3 277.8 256.3 277.2 258.7 277.3C261.2 277.4 261.2 278.1 263.6 278.3C266.1 278.5 266.9 276.6 268.5 277.9C271.7 280.4 270.6 284.9 273.4 285.9C275.5 286.7 275.5 282.7 278.3 281.5C280.4 280.5 280.8 281.8 283.2 281.5C285.7 281.1 285.7 281.0 288.1 280.1C290.6 279.3 291.0 277.4 293.0 278.1C295.9 279.1 295.0 282.1 297.9 283.5C299.9 284.4 301.0 284.0 302.8 282.6C305.9 280.3 304.9 276.8 307.7 275.9C309.8 275.2 309.9 278.8 312.6 279.5C314.8 280.0 315.1 279.0 317.5 278.3C320.0 277.6 320.3 275.9 322.4 276.5C325.2 277.4 324.5 280.5 327.3 281.5C329.4 282.1 329.8 279.8 332.2 279.8C334.7 279.8 335.2 282.4 337.1 281.5C340.1 280.0 339.3 275.7 342.0 275.0C344.1 274.4 344.4 278.9 346.9 279.0C349.3 279.1 349.4 275.2 351.8 275.3C354.3 275.4 354.0 278.4 356.7 279.2C358.9 279.9 359.2 278.1 361.6 278.3C364.1 278.5 364.2 280.6 366.5 280.1C369.1 279.6 368.7 277.5 371.4 276.5C373.6 275.6 374.2 275.5 376.3 276.5C379.1 277.7 378.4 280.0 381.2 280.9C383.3 281.6 383.7 280.6 386.1 279.8C388.6 278.9 388.5 277.7 391.0 277.5C393.4 277.3 393.5 278.0 395.9 279.0C398.4 280.0 398.3 281.5 400.8 281.5C403.2 281.5 403.2 279.1 405.7 279.0C408.1 278.9 408.2 281.4 410.6 281.2C413.1 281.0 413.1 278.1 415.5 278.3C418.0 278.5 418.0 282.1 420.4 281.9C422.9 281.7 422.6 279.3 425.3 277.5C427.5 276.0 428.2 274.4 430.2 275.3C433.1 276.7 432.2 280.9 435.1 282.0C437.1 282.8 437.7 278.7 440.0 279.0C442.5 279.3 442.5 283.3 444.9 283.1C447.4 283.0 446.9 279.6 449.8 278.3C451.8 277.4 452.2 278.7 454.7 278.7C457.1 278.7 457.3 277.7 459.6 278.3C462.2 279.1 462.1 279.8 464.5 281.5C467.0 283.3 467.2 285.9 469.4 285.4C472.1 284.8 471.4 281.8 474.2 279.2C476.3 277.5 477.0 276.2 479.1 276.8C481.9 277.5 481.2 279.9 484.0 282.0C486.1 283.6 487.1 282.4 488.9 284.2C492.0 287.2 491.7 292.1 493.8 291.5C496.6 290.8 495.4 285.7 498.7 281.6C500.3 279.6 501.3 279.1 503.6 279.4C506.2 279.7 507.2 280.4 508.5 283.0C512.1 290.2 511.3 300.1 513.4 299.0C516.2 297.5 514.8 287.9 518.3 277.8C519.7 274.0 521.4 269.9 523.2 271.1C526.3 273.3 525.7 284.7 528.1 284.5C530.6 284.4 529.4 276.5 533.0 270.6C534.3 268.4 537.4 266.1 537.9 268.4C542.3 287.1 538.4 292.2 542.8 312.6C543.3 314.9 547.2 316.0 547.7 313.8C552.1 296.6 548.6 287.4 552.6 274.0C553.5 271.1 554.6 280.2 557.5 281.2C559.5 282.0 559.8 277.9 562.4 277.6C564.7 277.3 565.2 280.7 567.3 280.1C570.1 279.2 571.4 271.9 572.2 274.5C576.3 287.8 572.8 295.9 577.1 311.9C577.7 314.0 581.3 312.9 582.0 310.7C586.2 298.3 584.1 296.6 586.9 282.6C589.0 272.5 590.8 272.8 591.8 262.6C595.7 221.7 595.8 180.4 596.7 180.4C597.9 183.2 597.3 245.1 601.6 284.9C602.2 290.5 605.0 268.4 606.5 271.2C609.9 277.6 607.1 289.2 611.4 303.4C612.0 305.6 615.3 305.8 616.3 304.0C620.2 297.0 618.8 294.9 621.2 285.7C623.7 276.1 622.6 271.0 626.1 266.4C627.5 264.6 629.5 269.2 631.0 272.9C634.4 281.5 632.0 283.9 635.9 291.1C636.9 293.0 639.8 289.2 640.8 291.1C644.7 299.0 642.5 307.6 645.7 310.7C647.4 312.4 648.6 305.9 650.6 300.6C653.5 292.6 654.7 292.6 655.5 284.1C659.6 240.4 659.6 189.8 660.4 196.1" fill="none" stroke="#6d4fb6" stroke-width="0.9"/>
<path d="M229.3 262.6C229.3 262.6 231.3 271.8 234.2 273.3C236.2 274.2 236.2 269.3 239.1 267.5C241.1 266.4 241.9 268.4 244.0 267.5C246.8 266.4 246.2 264.6 248.9 263.4C251.1 262.5 251.4 263.6 253.8 263.4C256.3 263.2 256.3 262.6 258.7 262.7C261.2 262.8 261.2 263.7 263.6 263.9C266.1 264.0 267.0 262.0 268.5 263.4C271.9 266.4 270.5 271.4 273.4 272.7C275.4 273.5 275.4 269.0 278.3 267.5C280.3 266.5 280.8 267.9 283.2 267.5C285.7 267.1 285.7 266.9 288.1 266.0C290.6 265.0 291.0 262.9 293.0 263.7C295.9 264.8 294.9 268.2 297.9 269.8C299.8 270.8 301.1 270.4 302.8 268.8C306.0 266.0 304.8 262.2 307.7 261.1C309.7 260.4 309.9 264.4 312.6 265.2C314.8 265.8 315.1 264.7 317.5 263.9C320.0 263.0 320.4 261.1 322.4 261.8C325.3 262.9 324.4 266.4 327.3 267.5C329.3 268.3 329.8 265.6 332.2 265.6C334.7 265.6 335.3 268.5 337.1 267.5C340.2 265.8 339.2 260.9 342.0 260.0C344.1 259.4 344.4 264.6 346.9 264.7C349.3 264.8 349.4 260.3 351.8 260.4C354.3 260.5 353.9 263.9 356.7 264.9C358.8 265.7 359.2 263.6 361.6 263.9C364.1 264.1 364.3 266.5 366.5 266.0C369.2 265.4 368.6 262.9 371.4 261.7C373.5 260.8 374.3 260.7 376.3 261.7C379.2 263.3 378.3 265.8 381.2 266.9C383.2 267.7 383.7 266.5 386.1 265.6C388.6 264.5 388.5 263.2 391.0 263.0C393.4 262.8 393.5 263.6 395.9 264.7C398.4 265.8 398.3 267.5 400.8 267.5C403.2 267.5 403.2 264.7 405.7 264.7C408.1 264.6 408.2 267.4 410.6 267.2C413.1 267.0 413.1 263.7 415.5 263.9C418.0 264.1 418.0 268.3 420.4 268.0C422.9 267.8 422.5 265.1 425.3 263.0C427.4 261.3 428.3 259.4 430.2 260.4C433.2 262.0 432.1 266.8 435.1 268.1C437.0 269.0 437.7 264.4 440.0 264.7C442.6 265.0 442.5 269.7 444.9 269.5C447.4 269.3 446.8 265.4 449.8 263.9C451.7 262.8 452.2 264.3 454.7 264.3C457.1 264.3 457.4 263.2 459.6 263.9C462.3 264.8 462.1 265.6 464.5 267.5C467.0 269.6 467.2 272.6 469.4 272.0C472.1 271.3 471.3 267.9 474.2 264.9C476.2 263.0 477.1 261.4 479.1 262.1C482.0 263.0 481.2 265.6 484.0 268.1C486.1 269.9 487.4 268.6 488.9 270.7C492.3 275.3 491.7 282.3 493.8 281.6C496.5 280.8 495.2 273.7 498.7 267.7C500.1 265.4 501.4 264.7 503.6 265.1C506.3 265.5 507.5 266.4 508.5 269.3C512.4 279.6 511.3 292.8 513.4 291.5C516.2 289.8 514.6 276.9 518.3 263.3C519.5 259.0 521.5 254.2 523.2 255.6C526.4 258.1 525.7 271.2 528.1 271.1C530.6 270.9 529.3 262.0 533.0 255.0C534.2 252.7 537.4 250.0 537.9 252.4C542.3 274.3 538.4 279.6 542.8 303.5C543.3 305.9 547.2 307.1 547.7 304.8C552.1 284.7 548.6 274.4 552.6 258.9C553.5 255.6 554.6 266.0 557.5 267.2C559.5 268.1 559.8 263.4 562.4 263.1C564.7 262.8 565.3 266.6 567.3 265.9C570.2 264.9 571.4 256.6 572.2 259.5C576.3 275.0 572.7 283.9 577.1 302.6C577.6 304.8 581.3 303.6 582.0 301.3C586.2 286.7 584.1 285.0 586.9 268.8C589.0 257.2 590.8 257.5 591.8 245.7C595.7 198.5 595.8 150.9 596.7 150.9C597.9 154.0 597.3 225.4 601.6 271.5C602.2 277.8 605.0 252.4 606.5 255.7C609.9 263.1 607.1 276.1 611.4 292.8C612.0 295.1 615.4 295.5 616.3 293.6C620.3 285.2 618.8 283.0 621.2 272.4C623.7 261.3 622.6 255.5 626.1 250.2C627.5 248.1 629.6 253.5 631.0 257.6C634.4 267.7 631.9 270.1 635.9 278.6C636.8 280.6 639.9 276.6 640.8 278.6C644.8 288.0 642.5 297.7 645.7 301.3C647.4 303.2 648.7 295.6 650.6 289.6C653.6 280.3 654.7 280.3 655.5 270.5C659.6 220.0 659.6 161.6 660.4 168.9" fill="none" stroke="#4a45c2" stroke-width="0.9"/>
<path d="M229.3 249.0C229.3 249.0 231.2 259.3 234.2 261.0C236.1 262.1 236.1 256.5 239.1 254.5C241.0 253.3 242.0 255.5 244.0 254.5C246.9 253.2 246.1 251.2 248.9 249.9C251.0 248.9 251.4 250.1 253.8 249.9C256.3 249.7 256.3 249.0 258.7 249.1C261.2 249.2 261.2 250.2 263.6 250.4C266.0 250.6 267.1 248.4 268.5 249.9C272.0 253.4 270.5 258.9 273.4 260.3C275.4 261.2 275.4 256.3 278.3 254.5C280.3 253.4 280.8 254.9 283.2 254.5C285.7 254.1 285.8 253.8 288.1 252.8C290.7 251.7 291.1 249.3 293.0 250.2C296.0 251.5 294.8 255.3 297.9 257.1C299.7 258.2 301.2 257.6 302.8 256.0C306.1 252.7 304.8 248.5 307.7 247.3C309.7 246.5 309.8 251.0 312.6 251.9C314.7 252.6 315.1 251.3 317.5 250.4C320.0 249.4 320.4 247.3 322.4 248.1C325.3 249.3 324.4 253.2 327.3 254.5C329.3 255.3 329.8 252.3 332.2 252.3C334.7 252.3 335.4 255.6 337.1 254.5C340.3 252.5 339.2 247.0 342.0 246.1C344.1 245.4 344.4 251.2 346.9 251.3C349.3 251.4 349.4 246.4 351.8 246.5C354.3 246.6 353.8 250.5 356.7 251.6C358.7 252.4 359.2 250.1 361.6 250.4C364.1 250.7 364.3 253.3 366.5 252.8C369.2 252.1 368.5 249.4 371.4 248.0C373.4 247.0 374.4 246.9 376.3 248.0C379.3 249.8 378.3 252.5 381.2 253.8C383.2 254.7 383.8 253.3 386.1 252.3C388.7 251.1 388.4 249.7 391.0 249.4C393.3 249.2 393.6 250.1 395.9 251.3C398.5 252.6 398.3 254.5 400.8 254.5C403.2 254.5 403.2 251.4 405.7 251.3C408.1 251.2 408.2 254.4 410.6 254.2C413.1 254.0 413.1 250.2 415.5 250.4C418.0 250.6 418.0 255.3 420.4 255.1C422.9 254.8 422.5 251.8 425.3 249.4C427.4 247.5 428.4 245.4 430.2 246.5C433.3 248.3 432.1 253.7 435.1 255.2C437.0 256.1 437.7 251.0 440.0 251.3C442.6 251.7 442.5 256.9 444.9 256.7C447.4 256.5 446.7 252.2 449.8 250.4C451.6 249.3 452.2 250.9 454.7 250.9C457.1 250.9 457.4 249.6 459.6 250.4C462.3 251.4 462.1 252.3 464.5 254.5C467.0 256.9 467.2 260.2 469.4 259.6C472.1 258.8 471.2 255.0 474.2 251.6C476.1 249.4 477.1 247.7 479.1 248.4C482.0 249.5 481.1 252.3 484.0 255.2C486.0 257.2 487.8 255.6 488.9 258.1C492.7 266.5 491.6 277.8 493.8 277.0C496.5 276.1 494.8 264.8 498.7 254.7C499.7 252.2 501.4 251.4 503.6 251.8C506.3 252.3 507.7 253.3 508.5 256.5C512.6 272.3 511.2 291.3 513.4 289.8C516.1 288.0 514.4 269.3 518.3 249.8C519.3 245.0 521.5 239.6 523.2 241.1C526.4 243.9 525.7 258.7 528.1 258.5C530.6 258.3 529.3 248.5 533.0 240.4C534.2 238.0 537.5 235.0 537.9 237.5C542.4 262.3 538.3 267.9 542.8 295.0C543.2 297.4 547.3 298.8 547.7 296.5C552.2 273.7 548.6 262.4 552.6 244.8C553.4 241.2 554.5 252.8 557.5 254.2C559.4 255.1 559.8 249.9 562.4 249.5C564.7 249.2 565.3 253.5 567.3 252.7C570.2 251.5 571.5 242.4 572.2 245.5C576.4 263.0 573.2 279.0 577.1 294.0C578.1 297.7 580.5 288.8 582.0 283.0C585.4 269.8 584.4 269.5 586.9 256.0C589.3 243.0 590.8 243.2 591.8 230.0C595.7 176.8 595.8 123.3 596.7 123.3C597.9 126.9 597.3 207.1 601.6 259.0C602.2 266.1 605.0 237.5 606.5 241.2C609.9 249.5 607.0 263.9 611.4 283.0C611.9 285.2 615.5 285.8 616.3 283.8C620.4 274.3 618.8 271.9 621.2 260.0C623.7 247.5 622.5 241.0 626.1 235.0C627.4 232.7 629.6 238.8 631.0 243.4C634.5 254.8 631.8 257.2 635.9 267.0C636.7 269.0 640.0 265.0 640.8 267.0C644.9 277.7 642.5 288.5 645.7 292.5C647.4 294.7 648.7 286.1 650.6 279.4C653.6 268.8 654.7 268.9 655.5 257.9C659.6 201.0 659.6 135.4 660.4 143.6" fill="none" stroke="#7f9bd2" stroke-width="0.9"/>
<circle cx="229.3" cy="353.5" r="0.8" fill="#fff" stroke="#2e97e6" stroke-width="0.3"/>
<circle cx="268.5" cy="353.7" r="0.8" fill="#fff" stroke="#2e97e6" stroke-width="0.3"/>
<circle cx="307.7" cy="353.3" r="0.8" fill="#fff" stroke="#2e97e6" stroke-width="0.3"/>
<circle cx="346.9" cy="353.9" r="0.8" fill="#fff" stroke="#2e97e6" stroke-width="0.3"/>
<circle cx="386.1" cy="354.0" r="0.8" fill="#fff" stroke="#2e97e6" stroke-width="0.3"/>
<circle cx="425.3" cy="353.6" r="0.8" fill="#fff" stroke="#2e97e6" stroke-width="0.3"/>
<circle cx="464.5" cy="354.4" r="0.8" fill="#fff" stroke="#2e97e6" stroke-width="0.3"/>
<circle cx="503.6" cy="354.0" r="0.8" fill="#fff" stroke="#2e97e6" stroke-width="0.3"/>
<circle cx="542.8" cy="360.3" r="0.8" fill="#fff" stroke="#2e97e6" stroke-width="0.3"/>
<circle cx="582.0" cy="360.0" r="0.8" fill="#fff" stroke="#2e97e6" stroke-width="0.3"/>
<circle cx="621.2" cy="355.2" r="0.8" fill="#fff" stroke="#2e97e6" stroke-width="0.3"/>
<circle cx="660.4" cy="337.9" r="0.8" fill="#fff" stroke="#2e97e6" stroke-width="0.3"/>
<circle cx="229.3" cy="337.3" r="0.8" fill="#fff" stroke="#6f7ec8" stroke-width="0.3"/>
<circle cx="268.5" cy="337.6" r="0.8" fill="#fff" stroke="#6f7ec8" stroke-width="0.3"/>
<circle cx="307.7" cy="336.9" r="0.8" fill="#fff" stroke="#6f7ec8" stroke-width="0.3"/>
<circle cx="346.9" cy="338.0" r="0.8" fill="#fff" stroke="#6f7ec8" stroke-width="0.3"/>
<circle cx="386.1" cy="338.3" r="0.8" fill="#fff" stroke="#6f7ec8" stroke-width="0.3"/>
<circle cx="425.3" cy="337.5" r="0.8" fill="#fff" stroke="#6f7ec8" stroke-width="0.3"/>
<circle cx="464.5" cy="338.9" r="0.8" fill="#fff" stroke="#6f7ec8" stroke-width="0.3"/>
<circle cx="503.6" cy="338.1" r="0.8" fill="#fff" stroke="#6f7ec8" stroke-width="0.3"/>
<circle cx="542.8" cy="350.2" r="0.8" fill="#fff" stroke="#6f7ec8" stroke-width="0.3"/>
<circle cx="582.0" cy="349.5" r="0.8" fill="#fff" stroke="#6f7ec8" stroke-width="0.3"/>
<circle cx="621.2" cy="340.4" r="0.8" fill="#fff" stroke="#6f7ec8" stroke-width="0.3"/>
<circle cx="660.4" cy="307.8" r="0.8" fill="#fff" stroke="#6f7ec8" stroke-width="0.3"/>
<circle cx="229.3" cy="323.6" r="0.8" fill="#fff" stroke="#f9cb55" stroke-width="0.3"/>
<circle cx="268.5" cy="324.0" r="0.8" fill="#fff" stroke="#f9cb55" stroke-width="0.3"/>
<circle cx="307.7" cy="322.9" r="0.8" fill="#fff" stroke="#f9cb55" stroke-width="0.3"/>
<circle cx="346.9" cy="324.5" r="0.8" fill="#fff" stroke="#f9cb55" stroke-width="0.3"/>
<circle cx="386.1" cy="324.9" r="0.8" fill="#fff" stroke="#f9cb55" stroke-width="0.3"/>
<circle cx="425.3" cy="323.8" r="0.8" fill="#fff" stroke="#f9cb55" stroke-width="0.3"/>
<circle cx="464.5" cy="325.8" r="0.8" fill="#fff" stroke="#f9cb55" stroke-width="0.3"/>
<circle cx="503.6" cy="324.7" r="0.8" fill="#fff" stroke="#f9cb55" stroke-width="0.3"/>
<circle cx="542.8" cy="341.6" r="0.8" fill="#fff" stroke="#f9cb55" stroke-width="0.3"/>
<circle cx="582.0" cy="340.7" r="0.8" fill="#fff" stroke="#f9cb55" stroke-width="0.3"/>
<circle cx="621.2" cy="327.9" r="0.8" fill="#fff" stroke="#f9cb55" stroke-width="0.3"/>
<circle cx="660.4" cy="282.3" r="0.8" fill="#fff" stroke="#f9cb55" stroke-width="0.3"/>
<circle cx="229.3" cy="309.1" r="0.8" fill="#fff" stroke="#f3ad7c" stroke-width="0.3"/>
<circle cx="268.5" cy="309.6" r="0.8" fill="#fff" stroke="#f3ad7c" stroke-width="0.3"/>
<circle cx="307.7" cy="308.3" r="0.8" fill="#fff" stroke="#f3ad7c" stroke-width="0.3"/>
<circle cx="346.9" cy="310.3" r="0.8" fill="#fff" stroke="#f3ad7c" stroke-width="0.3"/>
<circle cx="386.1" cy="310.8" r="0.8" fill="#fff" stroke="#f3ad7c" stroke-width="0.3"/>
<circle cx="425.3" cy="309.3" r="0.8" fill="#fff" stroke="#f3ad7c" stroke-width="0.3"/>
<circle cx="464.5" cy="311.9" r="0.8" fill="#fff" stroke="#f3ad7c" stroke-width="0.3"/>
<circle cx="503.6" cy="310.6" r="0.8" fill="#fff" stroke="#f3ad7c" stroke-width="0.3"/>
<circle cx="542.8" cy="332.6" r="0.8" fill="#fff" stroke="#f3ad7c" stroke-width="0.3"/>
<circle cx="582.0" cy="331.3" r="0.8" fill="#fff" stroke="#f3ad7c" stroke-width="0.3"/>
<circle cx="621.2" cy="314.7" r="0.8" fill="#fff" stroke="#f3ad7c" stroke-width="0.3"/>
<circle cx="660.4" cy="255.4" r="0.8" fill="#fff" stroke="#f3ad7c" stroke-width="0.3"/>
<circle cx="229.3" cy="299.9" r="0.8" fill="#fff" stroke="#f28a86" stroke-width="0.3"/>
<circle cx="268.5" cy="300.4" r="0.8" fill="#fff" stroke="#f28a86" stroke-width="0.3"/>
<circle cx="307.7" cy="298.9" r="0.8" fill="#fff" stroke="#f28a86" stroke-width="0.3"/>
<circle cx="346.9" cy="301.3" r="0.8" fill="#fff" stroke="#f28a86" stroke-width="0.3"/>
<circle cx="386.1" cy="301.9" r="0.8" fill="#fff" stroke="#f28a86" stroke-width="0.3"/>
<circle cx="425.3" cy="300.2" r="0.8" fill="#fff" stroke="#f28a86" stroke-width="0.3"/>
<circle cx="464.5" cy="303.1" r="0.8" fill="#fff" stroke="#f28a86" stroke-width="0.3"/>
<circle cx="503.6" cy="301.6" r="0.8" fill="#fff" stroke="#f28a86" stroke-width="0.3"/>
<circle cx="542.8" cy="326.8" r="0.8" fill="#fff" stroke="#f28a86" stroke-width="0.3"/>
<circle cx="582.0" cy="325.4" r="0.8" fill="#fff" stroke="#f28a86" stroke-width="0.3"/>
<circle cx="621.2" cy="306.4" r="0.8" fill="#fff" stroke="#f28a86" stroke-width="0.3"/>
<circle cx="660.4" cy="238.3" r="0.8" fill="#fff" stroke="#f28a86" stroke-width="0.3"/>
<circle cx="229.3" cy="293.2" r="0.8" fill="#fff" stroke="#e46288" stroke-width="0.3"/>
<circle cx="268.5" cy="293.7" r="0.8" fill="#fff" stroke="#e46288" stroke-width="0.3"/>
<circle cx="307.7" cy="292.1" r="0.8" fill="#fff" stroke="#e46288" stroke-width="0.3"/>
<circle cx="346.9" cy="294.6" r="0.8" fill="#fff" stroke="#e46288" stroke-width="0.3"/>
<circle cx="386.1" cy="295.3" r="0.8" fill="#fff" stroke="#e46288" stroke-width="0.3"/>
<circle cx="425.3" cy="293.4" r="0.8" fill="#fff" stroke="#e46288" stroke-width="0.3"/>
<circle cx="464.5" cy="296.7" r="0.8" fill="#fff" stroke="#e46288" stroke-width="0.3"/>
<circle cx="503.6" cy="295.0" r="0.8" fill="#fff" stroke="#e46288" stroke-width="0.3"/>
<circle cx="542.8" cy="322.6" r="0.8" fill="#fff" stroke="#e46288" stroke-width="0.3"/>
<circle cx="582.0" cy="321.0" r="0.8" fill="#fff" stroke="#e46288" stroke-width="0.3"/>
<circle cx="621.2" cy="300.2" r="0.8" fill="#fff" stroke="#e46288" stroke-width="0.3"/>
<circle cx="660.4" cy="225.7" r="0.8" fill="#fff" stroke="#e46288" stroke-width="0.3"/>
<circle cx="229.3" cy="277.2" r="0.8" fill="#fff" stroke="#6d4fb6" stroke-width="0.3"/>
<circle cx="268.5" cy="277.9" r="0.8" fill="#fff" stroke="#6d4fb6" stroke-width="0.3"/>
<circle cx="307.7" cy="275.9" r="0.8" fill="#fff" stroke="#6d4fb6" stroke-width="0.3"/>
<circle cx="346.9" cy="279.0" r="0.8" fill="#fff" stroke="#6d4fb6" stroke-width="0.3"/>
<circle cx="386.1" cy="279.8" r="0.8" fill="#fff" stroke="#6d4fb6" stroke-width="0.3"/>
<circle cx="425.3" cy="277.5" r="0.8" fill="#fff" stroke="#6d4fb6" stroke-width="0.3"/>
<circle cx="464.5" cy="281.5" r="0.8" fill="#fff" stroke="#6d4fb6" stroke-width="0.3"/>
<circle cx="503.6" cy="279.4" r="0.8" fill="#fff" stroke="#6d4fb6" stroke-width="0.3"/>
<circle cx="542.8" cy="312.6" r="0.8" fill="#fff" stroke="#6d4fb6" stroke-width="0.3"/>
<circle cx="582.0" cy="310.7" r="0.8" fill="#fff" stroke="#6d4fb6" stroke-width="0.3"/>
<circle cx="621.2" cy="285.7" r="0.8" fill="#fff" stroke="#6d4fb6" stroke-width="0.3"/>
<circle cx="660.4" cy="196.1" r="0.8" fill="#fff" stroke="#6d4fb6" stroke-width="0.3"/>
<circle cx="229.3" cy="262.6" r="0.8" fill="#fff" stroke="#4a45c2" stroke-width="0.3"/>
<circle cx="268.5" cy="263.4" r="0.8" fill="#fff" stroke="#4a45c2" stroke-width="0.3"/>
<circle cx="307.7" cy="261.1" r="0.8" fill="#fff" stroke="#4a45c2" stroke-width="0.3"/>
<circle cx="346.9" cy="264.7" r="0.8" fill="#fff" stroke="#4a45c2" stroke-width="0.3"/>
<circle cx="386.1" cy="265.6" r="0.8" fill="#fff" stroke="#4a45c2" stroke-width="0.3"/>
<circle cx="425.3" cy="263.0" r="0.8" fill="#fff" stroke="#4a45c2" stroke-width="0.3"/>
<circle cx="464.5" cy="267.5" r="0.8" fill="#fff" stroke="#4a45c2" stroke-width="0.3"/>
<circle cx="503.6" cy="265.1" r="0.8" fill="#fff" stroke="#4a45c2" stroke-width="0.3"/>
<circle cx="542.8" cy="303.5" r="0.8" fill="#fff" stroke="#4a45c2" stroke-width="0.3"/>
<circle cx="582.0" cy="301.3" r="0.8" fill="#fff" stroke="#4a45c2" stroke-width="0.3"/>
<circle cx="621.2" cy="272.4" r="0.8" fill="#fff" stroke="#4a45c2" stroke-width="0.3"/>
<circle cx="660.4" cy="168.9" r="0.8" fill="#fff" stroke="#4a45c2" stroke-width="0.3"/>
<circle cx="229.3" cy="249.0" r="0.8" fill="#fff" stroke="#7f9bd2" stroke-width="0.3"/>
<circle cx="268.5" cy="249.9" r="0.8" fill="#fff" stroke="#7f9bd2" stroke-width="0.3"/>
<circle cx="307.7" cy="247.3" r="0.8" fill="#fff" stroke="#7f9bd2" stroke-width="0.3"/>
<circle cx="346.9" cy="251.3" r="0.8" fill="#fff" stroke="#7f9bd2" stroke-width="0.3"/>
<circle cx="386.1" cy="252.3" r="0.8" fill="#fff" stroke="#7f9bd2" stroke-width="0.3"/>
<circle cx="425.3" cy="249.4" r="0.8" fill="#fff" stroke="#7f9bd2" stroke-width="0.3"/>
<circle cx="464.5" cy="254.5" r="0.8" fill="#fff" stroke="#7f9bd2" stroke-width="0.3"/>
<circle cx="503.6" cy="251.8" r="0.8" fill="#fff" stroke="#7f9bd2" stroke-width="0.3"/>
<circle cx="542.8" cy="295.0" r="0.8" fill="#fff" stroke="#7f9bd2" stroke-width="0.3"/>
<circle cx="582.0" cy="283.0" r="0.8" fill="#fff" stroke="#7f9bd2" stroke-width="0.3"/>
<circle cx="621.2" cy="260.0" r="0.8" fill="#fff" stroke="#7f9bd2" stroke-width="0.3"/>
<circle cx="660.4" cy="143.6" r="0.8" fill="#fff" stroke="#7f9bd2" stroke-width="0.3"/><line x1="229.3" x2="229.3" y1="372" y2="374" stroke="#ccc" stroke-width="0.5"/><line x1="268.5" x2="268.5" y1="372" y2="374" stroke="#ccc" stroke-width="0.5"/><line x1="307.7" x2="307.7" y1="372" y2="374" stroke="#ccc" stroke-width="0.5"/><line x1="346.9" x2="346.9" y1="372" y2="374" stroke="#ccc" stroke-width="0.5"/><line x1="386.1" x2="386.1" y1="372" y2="374" stroke="#ccc" stroke-width="0.5"/><line x1="425.3" x2="425.3" y1="372" y2="374" stroke="#ccc" stroke-width="0.5"/><line x1="464.5" x2="464.5" y1="372" y2="374" stroke="#ccc" stroke-width="0.5"/><line x1="503.6" x2="503.6" y1="372" y2="374" stroke="#ccc" stroke-width="0.5"/><line x1="542.8" x2="542.8" y1="372" y2="374" stroke="#ccc" stroke-width="0.5"/><line x1="582.0" x2="582.0" y1="372" y2="374" stroke="#ccc" stroke-width="0.5"/><line x1="621.2" x2="621.2" y1="372" y2="374" stroke="#ccc" stroke-width="0.5"/><line x1="660.4" x2="660.4" y1="372" y2="374" stroke="#ccc" stroke-width="0.5"/>
    <line x1="229" x2="665.5" y1="371.9" y2="371.9" stroke="#ccc" stroke-width="0.5"/>
    <g font-family="Liberation Sans, sans-serif" font-size="5.8" fill="#5a5a5a" text-anchor="middle">
      <text x="229.3" y="380.8">2018/09/28</text>
<text x="268.5" y="380.8">2018/10/06</text>
<text x="307.7" y="380.8">2018/10/14</text>
<text x="346.9" y="380.8">2018/10/22</text>
<text x="386.1" y="380.8">2018/10/30</text>
<text x="425.3" y="380.8">2018/11/07</text>
<text x="464.5" y="380.8">2018/11/15</text>
<text x="503.6" y="380.8">2018/11/23</text>
<text x="542.8" y="380.8">2018/12/01</text>
<text x="582.0" y="380.8">2018/12/09</text>
<text x="621.2" y="380.8">2018/12/17</text>
<text x="660.4" y="380.8">2018/12/25</text>
    </g>
    <!-- legend rings -->
    <circle cx="209.75" cy="98.95" r="2.45" fill="#fff" stroke="#3b9de6" stroke-width="0.6"/>
    <circle cx="307.75" cy="98.95" r="2.45" fill="#fff" stroke="#8f9bd6" stroke-width="0.6"/>
    <circle cx="406.75" cy="98.95" r="2.45" fill="#fff" stroke="#f7c948" stroke-width="0.6"/>
    <circle cx="505.75" cy="98.95" r="2.45" fill="#fff" stroke="#f2a877" stroke-width="0.6"/>
    <circle cx="602.75" cy="98.95" r="2.45" fill="#fff" stroke="#ee6b6b" stroke-width="0.6"/>
    <!-- legend arrows -->
    <path d="M647.8 99 L651.8 95.8 L651.8 102.2Z" fill="#b4b4b4"/>
    <path d="M669.3 99 L665.5 95.8 L665.5 102.2Z" fill="#2f4554"/>

    <!-- ===== ICONS ===== -->
    <!-- logo -->
    <circle cx="15" cy="13.2" r="9.7" fill="#2a9ce9"/>
    <path d="M7.6 12.6 L14 8.8 L21.6 11.6 L15.4 15.8Z" fill="#9dbcf8"/>
    <path d="M7.6 12.6 L15.4 15.8 L15.4 19.4 L7.6 15.8Z" fill="#7faaf4"/>
    <path d="M15.4 15.8 L21.6 11.6 L21.6 14.8 L15.4 19.4Z" fill="#6a9df0"/>
    <path d="M14.6 12.6 L21.4 6.6" stroke="#b4d6fb" stroke-width="1" stroke-linecap="round"/>
    <!-- dashboard -->
    <path d="M9 46 L9 44 A6 6 0 0 1 21 44 L21 46Z" fill="#d0d3da"/>
    <g stroke="#2c313a" stroke-width="0.9" stroke-linecap="round">
      <line x1="15" y1="45.4" x2="15" y2="41.4"/>
      <line x1="11" y1="43.7" x2="12.2" y2="43.7"/>
      <line x1="17.8" y1="43.7" x2="19" y2="43.7"/>
      <line x1="12.3" y1="40.6" x2="13" y2="41.4"/>
      <line x1="17.7" y1="40.6" x2="17" y2="41.4"/>
    </g>
    <!-- pie -->
    <circle cx="15" cy="80" r="6" fill="#1f9be6"/>
    <path d="M15.3 74.5 L15.3 80 L19.5 83.6" stroke="#2c313a" stroke-width="0.8" fill="none"/>
    <!-- users -->
    <g fill="#c5c9d0">
      <circle cx="13.2" cy="114.8" r="2.3"/>
      <path d="M8.8 121.5 C8.8 118.5 10.8 117.6 13.2 117.6 C15.6 117.6 17.6 118.5 17.6 121.5Z"/>
      <circle cx="18.8" cy="116.8" r="1.5"/>
      <path d="M17.2 121.5 C17.2 119.6 17.8 119 18.8 119 C20.2 119 21 119.8 21 121.5Z"/>
    </g>
    <!-- presentation -->
    <g fill="#b5bac3">
      <rect x="8.8" y="148.6" width="12.4" height="1.4"/>
      <rect x="9.6" y="150" width="10.8" height="6.4"/>
      <rect x="14.6" y="156.4" width="0.8" height="2.6"/>
      <rect x="13.4" y="158.6" width="3.2" height="0.8"/>
    </g>
    <!-- gear -->
    <circle cx="14.9" cy="343.6" r="3.2" fill="none" stroke="#aeb3bc" stroke-width="2.2"/>
    <circle cx="14.9" cy="343.6" r="4.7" fill="none" stroke="#aeb3bc" stroke-width="1.4" stroke-dasharray="2 1.69"/>
    <!-- avatar -->
    <circle cx="14.9" cy="383" r="9.5" fill="#b6b0f6"/>
    <circle cx="14.9" cy="380.3" r="3.2" fill="#dcd9fc"/>
    <path d="M8.5 390 C8.5 385.5 11.5 384.6 14.9 384.6 C18.3 384.6 21.3 385.5 21.3 390 A9.5 9.5 0 0 1 8.5 390Z" fill="#dcd9fc"/>

    <!-- event analysis icon -->
    <g stroke="#222" stroke-width="0.8" stroke-linecap="round" fill="none">
      <line x1="39.6" y1="13.4" x2="41.2" y2="13.6"/>
      <line x1="40.6" y1="10.6" x2="41.8" y2="11.8"/>
      <line x1="43.2" y1="10" x2="43.4" y2="11.4"/>
      <line x1="45.8" y1="10.8" x2="45" y2="11.8"/>
      <line x1="40.6" y1="16" x2="41.6" y2="15.2"/>
    </g>
    <path d="M42.6 12.8 L46.6 14.4 L45.2 15.2 L46.6 16.8 L45.8 17.5 L44.4 15.9 L43.6 17Z" fill="#222"/>
    <!-- chevron -->
    <path d="M171 12.3 L173.8 15.4 L176.6 12.3" stroke="#333" stroke-width="0.8" fill="none"/>
    <!-- model condition icon -->
    <rect x="170.4" y="33.6" width="6.4" height="4.6" fill="none" stroke="#a9aeb8" stroke-width="0.6"/>
    <path d="M172.4 34.8 L174.8 34.8 L174.8 37.2 M172.4 36 L172.4 37.2" stroke="#a9aeb8" stroke-width="0.5" fill="none"/>
    <!-- formula icon -->
    <rect x="125.3" y="77.4" width="4.2" height="5" fill="none" stroke="#333" stroke-width="0.5"/>
    <path d="M126.3 79 L128.5 79 M126.3 80.6 L128.5 80.6 M127.4 78.4 L127.4 81.4" stroke="#333" stroke-width="0.4"/>
    <!-- province user icon -->
    <circle cx="44.9" cy="196.5" r="1.05" fill="none" stroke="#3a9ae0" stroke-width="0.55"/>
    <path d="M43.2 200.2 C43.2 198.5 43.8 198.1 44.9 198.1 C46 198.1 46.6 198.5 46.6 200.2Z" fill="none" stroke="#3a9ae0" stroke-width="0.55"/>

    <!-- all-users icon -->
    <g fill="#1e8ee0">
      <circle cx="240.6" cy="35.2" r="1.3"/>
      <path d="M238.3 38.9 C238.3 37.2 239.3 36.8 240.6 36.8 C241.9 36.8 242.9 37.2 242.9 38.9Z"/>
      <circle cx="243.2" cy="36.2" r="0.9"/>
      <path d="M242.6 38.9 C242.6 37.7 242.8 37.5 243.3 37.5 C244 37.5 244.5 37.9 244.5 38.9Z"/>
    </g>
    <rect x="282.7" y="31.1" width="47" height="11" rx="5.5" fill="none" stroke="#a8a8a8" stroke-width="0.6" stroke-dasharray="1.7 1.1"/>
    <!-- plus -->
    <path d="M290 36.6 L295 36.6 M292.5 34.1 L292.5 39.1" stroke="#8a8a8a" stroke-width="0.6"/>
    <!-- circle plus -->
    <circle cx="627.4" cy="13" r="4.2" fill="none" stroke="#333" stroke-width="0.8"/>
    <path d="M627.4 10.6 L627.4 15.4 M625.4 13 L629.4 13" stroke="#333" stroke-width="0.7"/>
    <!-- copy -->
    <path d="M645.6 9.6 L649.6 9.6 Q651.6 9.6 651.6 11.6 L651.6 15.2 L645.6 15.2Z" fill="none" stroke="#333" stroke-width="0.8"/>
    <path d="M644.4 10.8 L644.4 16.5 L650.4 16.5" fill="none" stroke="#333" stroke-width="0.9"/>
    <!-- download -->
    <path d="M666.7 10.4 L666.7 14.6 M663.6 16.4 L669.8 16.4" stroke="#333" stroke-width="0.8" fill="none"/>
    <path d="M665 13 L666.7 14.8 L668.4 13" stroke="#333" stroke-width="0.7" fill="none"/>
    <path d="M663.6 15 L663.6 16.4 M669.8 15 L669.8 16.4" stroke="#333" stroke-width="0.6"/>
    <!-- search -->
    <circle cx="637.6" cy="35.8" r="2.6" fill="none" stroke="#666" stroke-width="0.7"/>
    <path d="M635.7 37.8 L633.6 39.9" stroke="#666" stroke-width="0.8"/>
    <!-- refresh -->
    <path d="M670.7 35.6 A3.1 3.1 0 1 0 670.9 37.6" fill="none" stroke="#777" stroke-width="0.7"/>
    <path d="M669.6 34.2 L671 35.6 L671.4 33.8" fill="none" stroke="#777" stroke-width="0.5"/>
    <!-- calendar -->
    <rect x="212.6" y="69.3" width="5" height="4.1" fill="none" stroke="#444" stroke-width="0.55"/>
    <path d="M212.6 70.5 L217.6 70.5 M213.9 68.5 L213.9 69.6 M216.3 68.5 L216.3 69.6" stroke="#444" stroke-width="0.55"/>
    <!-- select chevron -->
    <path d="M325 70.4 L326.9 72.3 L328.8 70.4" stroke="#555" stroke-width="0.6" fill="none"/>
    <!-- toggle icons -->
    <path d="M604.8 67 L604.8 73.4 L611.4 73.4" stroke="#333" stroke-width="0.8" fill="none"/>
    <path d="M606 71.6 L607.6 69.4 L608.8 70.8 L610.8 67.6" stroke="#333" stroke-width="0.7" fill="none"/>
    <path d="M622.3 67.4 L622.3 73.4 M627.6 67.4 L627.6 73.4" stroke="#999" stroke-width="0.6"/>
    <path d="M623.8 69.6 L626.2 72.6 M626.2 69.6 L623.8 72.6" stroke="#999" stroke-width="0.55"/>
    <path d="M640 73.7 L640 70.6 L642.4 69.4 L643.8 70.6 L647.3 67.3 L647.3 73.7Z" fill="#fff"/>
    <rect x="657.4" y="67.8" width="7.4" height="4.8" fill="none" stroke="#333" stroke-width="0.8"/>
    <path d="M657.4 69.4 L664.8 69.4 M659.8 67.8 L659.8 72.6" stroke="#333" stroke-width="0.7"/>

    <!-- mascot -->
    <circle cx="668" cy="379.6" r="12.4" fill="#000" opacity="0.03"/>
    <circle cx="668" cy="379.4" r="11.8" fill="#fff"/>
    <path d="M656.3 383.6 C656.6 379.2 660.8 376.6 665.6 376.9 C671 377.2 675.2 380.6 675 384.6 C674.8 388.4 670.6 389.7 666 389.6 C660.6 389.5 656 388 656.3 383.6Z" fill="#27aef0"/>
    <path d="M660.6 374 C660.8 372.4 662.2 372 662.8 372.8 C663.4 373.6 664.4 372.6 665 371.8" stroke="#7fc8f2" stroke-width="0.9" fill="none" stroke-linecap="round"/>
    <path d="M660 381.4 L661 382.6 L660.2 383.4 M669 382.2 L667.8 383 L668.8 383.8 M664 385.4 L665.4 384.8" stroke="#1a6db5" stroke-width="0.6" fill="none"/>
    <g font-family="Liberation Sans, sans-serif" font-weight="bold" fill="#f5c535">
      <text x="668" y="377" font-size="11" transform="rotate(-12 671 373)">?</text>
      <text x="672.6" y="379.6" font-size="9.5" transform="rotate(14 675 376)">?</text>
    </g>
  </svg>
</div>
</body>
</html>
